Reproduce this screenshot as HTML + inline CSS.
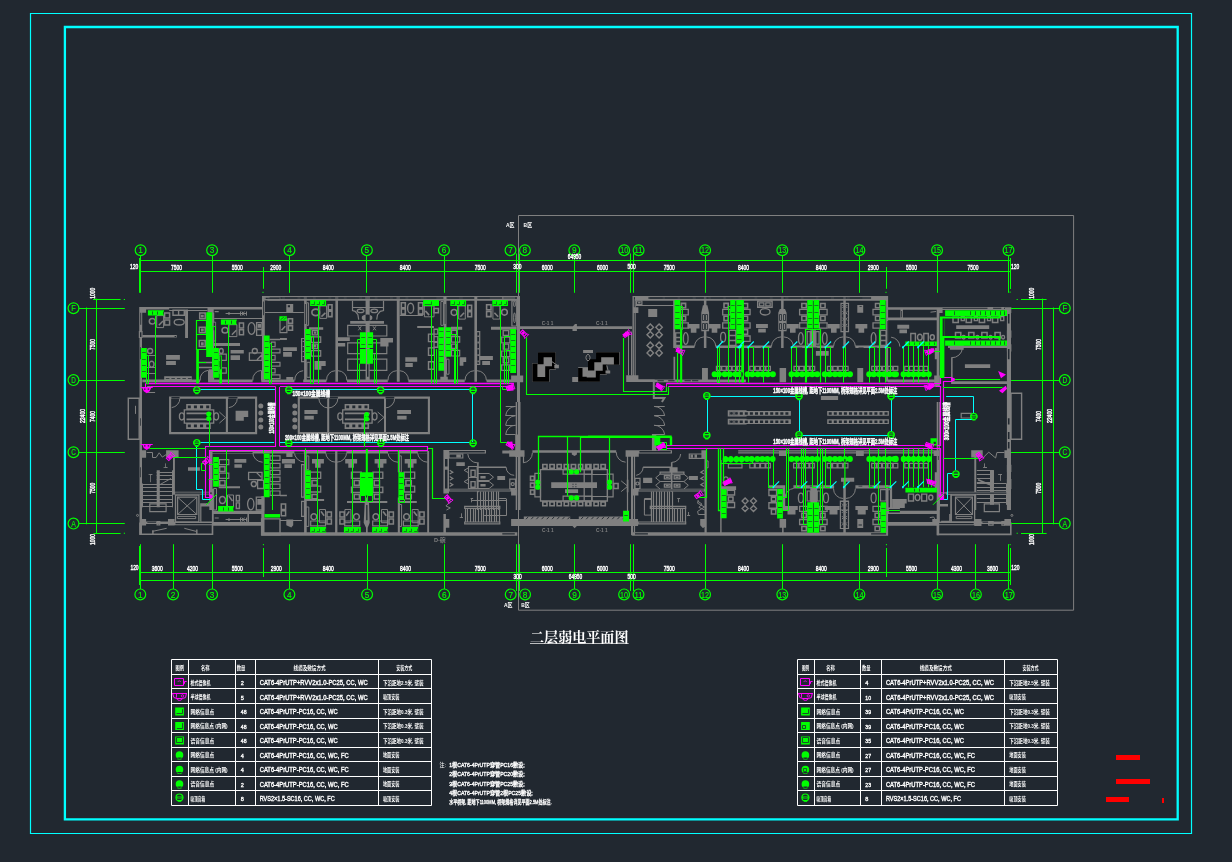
<!DOCTYPE html>
<html lang="zh"><head><meta charset="utf-8"><title>二层弱电平面图</title>
<style>
html,body{margin:0;padding:0;background:#212830;overflow:hidden}
svg{display:block}
.t{font-family:"Liberation Sans","Noto Sans CJK SC",sans-serif;fill:#fff}
.tr{font-family:"Liberation Serif","Noto Serif CJK SC",serif;fill:#fff}
</style></head><body>
<svg width="1232" height="862" viewBox="0 0 1232 862">
<rect width="1232" height="862" fill="#212830"/>
<path fill="#808080" d="M139.2 306.9H146.1V312.8H139.2ZM139.2 306.9H169.2V309.5H139.2ZM169.2 306.9H262V308.2H169.2ZM213.7 308.2H262V309.5H213.7ZM207.5 306.9H213.7V312.8H207.5ZM139.2 306.9H142.2V331.6H139.2ZM139.5 337.5H142V402H139.5ZM185.1 309.5H188V337.9H185.1ZM142.3 335.1H176.8V337.6H142.3ZM212 312.8H214.2V381.7H212ZM208.7 369.2H214.2V381.7H208.7ZM142.3 379.5H199.9V382.2H142.3ZM208.1 379.5H252.6V382.2H208.1ZM261.3 379.5H280V382.2H261.3ZM262 295.9H264.8V381.7H262ZM262 295.9H280V297.1H262ZM264.8 299H280V300H264.8ZM164.2 376.3H191.8V379.5H164.2ZM166.1 355H179.9V359.8H166.1ZM166.1 361H175.9V365.1H166.1ZM200.9 314.7H203.7V317.6H200.9ZM200.9 328.5H203.7V331.6H200.9ZM200.9 342.2H203.7V345.4H200.9ZM214.7 311H218.7V312.3H214.7ZM213.7 343.1H240V346H213.7ZM230.6 349.9H243.8V353.6H230.6ZM230.6 355.2H240V359.9H230.6ZM257.6 324.1H261.1V327.8H257.6ZM139.5 402H142V510H139.5ZM139.5 450.2H146.1V457.8H139.5ZM186.5 412.5H211.5V414.3H186.5ZM186.5 418.5H211.5V420.3H186.5ZM235.6 410.8L248.2 410.8L248.2 417L243.8 417L243.8 420.8L235.6 420.8ZM258.3 406.1a2.5 2.5 0 1 0 5 0a2.5 2.5 0 1 0 -5 0ZM258.3 413a2.5 2.5 0 1 0 5 0a2.5 2.5 0 1 0 -5 0ZM258.3 419.9a2.5 2.5 0 1 0 5 0a2.5 2.5 0 1 0 -5 0ZM258.3 427.1a2.5 2.5 0 1 0 5 0a2.5 2.5 0 1 0 -5 0ZM173 457.8H174.9V494.7H173ZM166.1 450.2H178.6V457.1H166.1ZM173 491.7H212.5V494.5H173ZM156.7 470.3H159.8V507.3H156.7ZM188 467.2H199.9V470.7H188ZM209.3 450.9H280V453.4H209.3ZM209.3 450.9H212.5V510H209.3ZM234.4 459H246.3V462.8H234.4ZM234.4 464.3H241.9V467.8H234.4ZM218.7 486.2H240V488.2H218.7ZM257.3 499.1H262V504.8H257.3ZM139.5 460H142V534.6H139.5ZM139.5 518.9H146.1V525.4H139.5ZM168 518.9H174.6V525.4H168ZM146.1 521.4H168V523.9H146.1ZM200.8 503.9H209.7V506.6H200.8ZM174.2 522H213.1V525.2H174.2ZM212 488.8H213.7V525.8H212ZM213.7 510.8H263.8V513.9H213.7ZM213.1 522H261.3V525.8H213.1ZM261.3 496.3H264.5V535.2H261.3ZM214.7 517.4H218.7V518.6H214.7ZM264.7 295.9H434V297.3H264.7ZM267.5 298.8H434V300.8H267.5ZM303.8 295.9H306.9V300.8H303.8ZM335.1 295.9H338.3V300.8H335.1ZM365.2 295.9H370V300.8H365.2ZM396.5 295.9H399.9V300.8H396.5ZM304.1 300.8H306.7V381.7H304.1ZM335.4 300.8H338V381.7H335.4ZM396.8 300.8H399.7V381.7H396.8ZM365.6 300.8H369.7V381.7H365.6ZM280 379.5H294.4V382.2H280ZM286.3 377.1H293.2V382.2H286.3ZM303.2 379.5H326.4V382.2H303.2ZM347 379.5H387.8V382.2H347ZM408.4 379.5H434V382.2H408.4ZM286.3 304H293.2V312.8H286.3ZM280 337.9H286.9V339.9H280ZM283.1 347.3H296.9V351.1H283.1ZM283.1 352.1H291.9V356.7H283.1ZM309.1 327.2H323.2V329.8H309.1ZM313.8 331.6H316.3V333.8H313.8ZM313.8 345.1H316.3V347.6H313.8ZM314.5 361L325.7 361L325.7 366.1L321.4 366.1L321.4 369.8L314.5 369.8ZM350.2 320.9H384V323.8H350.2ZM361.8 317.8a5.3 2.8 0 1 0 10.5 0a5.3 2.8 0 1 0 -10.5 0ZM337 337.2H349.8V341.1H337ZM337 343.1H345.2V346.6H337ZM380.3 337.9L393 337.9L393 342.4L388.5 342.4L388.5 346.6L380.3 346.6ZM417.2 326H434V328.1H417.2ZM405.3 357.3H417.2V361.7H405.3ZM405.3 362.9H412.8V366.9H405.3ZM292.3 406.1a2.5 2.5 0 1 0 5 0a2.5 2.5 0 1 0 -5 0ZM292.3 413a2.5 2.5 0 1 0 5 0a2.5 2.5 0 1 0 -5 0ZM292.3 419.9a2.5 2.5 0 1 0 5 0a2.5 2.5 0 1 0 -5 0ZM292.3 427.1a2.5 2.5 0 1 0 5 0a2.5 2.5 0 1 0 -5 0ZM304.4 410.1H317.6V414H304.4ZM304.4 415.8H313.8V419.5H304.4ZM344.9 412.5H369.8V414.3H344.9ZM344.9 418.5H369.8V420.3H344.9ZM397.2 410.1H411V414H397.2ZM397.2 415.8H406.6V419.5H397.2ZM280 450.9H429.1V453.4H280ZM304.1 453.4H306.7V510H304.1ZM335.1 452.1H337.4V510H335.1ZM397.8 453.4H399.9V472.2H397.8ZM427.2 450.9H429.1V510H427.2ZM281.9 459H295V463.4H281.9ZM284.4 464.3H291.9V467.9H284.4ZM286.3 451.5H292.5V457.1H286.3ZM312 459L323.9 459L323.9 463.4L320.7 463.4L320.7 467.8L315.1 467.8L315.1 463.4L312 463.4ZM345.2 459L357.1 459L357.1 463.4L353.9 463.4L353.9 467.8L348.3 467.8L348.3 463.4L345.2 463.4ZM374.6 459L386.5 459L386.5 463.4L383.4 463.4L383.4 467.8L377.7 467.8L377.7 463.4L374.6 463.4ZM404.7 459L416.6 459L416.6 463.4L413.5 463.4L413.5 467.8L407.8 467.8L407.8 463.4L404.7 463.4ZM306.3 499.1H324.1V501H306.3ZM397.8 501H416.8V502.9H397.8ZM347 501H387.3V502.9H347ZM280 494.7H286.9V496.2H280ZM261.2 532.3H434V535.7H261.2ZM304.1 497.6H306.7V532.3H304.1ZM335.1 497.6H337.4V532.3H335.1ZM397.8 497.6H399.9V532.3H397.8ZM427.2 497.6H429.1V532.3H427.2ZM366 497.6H367.7V532.3H366ZM364.7 502.6L369 502.6L369.7 522.7L367.7 527.7L366 527.7L363.7 522.7ZM286.3 519.5L293.2 519.5L293.2 525.2L291.3 527.4L286.3 525.2ZM434 295.9H519.8V297.3H434ZM434 298.8H517.3V300.8H434ZM443.4 295.9H446.5V300.8H443.4ZM474.1 295.9H477.2V300.8H474.1ZM502.3 296.5H514.8V300H502.3ZM443.8 300.8H446.5V381.7H443.8ZM474.4 300.8H477V381.7H474.4ZM517 295.9H520V402H517ZM511.1 375.5H523.2V382.2H511.1ZM450.9 326.8H462.2V329.7H450.9ZM491 326.8H516.7V329.7H491ZM434 379.5H464.7V382.2H434ZM486.6 379.5H523.2V382.2H486.6ZM440.3 376.7H447.8V382.2H440.3ZM459.7 357.3L466.2 357.3L466.2 361.9L463.4 361.9L463.4 365.7L459.7 365.7ZM477.4 335.4H478.9V337.1H477.4ZM477.4 341.6H478.9V343.4H477.4ZM477.4 347.9H478.9V349.6H477.4ZM477.4 354.2H478.9V355.9H477.4ZM477.4 360.4H478.9V362.2H477.4ZM479.7 356H492.9V359.9H479.7ZM482.2 361H490V364.9H482.2ZM520 326.3H588V329.1H520ZM572.5 326.8L575 324.1L576.9 324.1L576.9 331.1L572.5 331.1ZM515.7 402H517.2V510H515.7ZM519 402H520.5V510H519ZM515.2 434.6H520.5V457.1H515.2ZM509.2 450.2H524.5V456.8H509.2ZM502.3 450.6H515.5V453.4H502.3ZM443.4 450H486V453.6H443.4ZM443.4 450.2H449V493.5H443.4ZM456.3 454.6H460.9V457.4H456.3ZM480.4 475.9H485.6V478.4H480.4ZM480.4 484.1H485.6V486.6H480.4ZM456.3 462.2H464.8V465.9H456.3ZM497.3 475.9H505.1V479.9H497.3ZM449 488.7H515.5V491.5H449ZM511.1 489.7H517.3V495.6H511.1ZM532.4 450.2H588V452.8H532.4ZM571.8 452.8L576.9 452.8L576.9 454.6L574.6 456.1L571.8 454.6ZM551.2 482.2H588V488H551.2ZM565 489.2H578.1V493H565ZM413.9 532.3H517.3V535.7H413.9ZM443.4 513.9H445.9V532.3H443.4ZM443.4 518.9H449.3V527.7H443.4ZM511.1 519.1H588V525.9H511.1ZM523.8 516.4H570.2V519.6H523.8ZM578.8 516.4H628.2V519.6H578.8ZM572.5 525.9L576.9 525.9L574.6 528.3ZM588 326.3H632.1V329.1H588ZM632.5 295.9H633.9V381.7H632.5ZM634.6 300.8H635.7V381.7H634.6ZM632.9 307.2H638.4V313H632.9ZM626.2 375.2H638.4V382H626.2ZM632.5 295.9H745.9V297.3H632.5ZM634.6 298.8H745.9V300.8H634.6ZM635 297.1H648.4V299.6H635ZM703.9 295.9H706.4V300.8H703.9ZM638.1 301.8H640.6V303.5H638.1ZM648.2 309H657.2V316.9H648.2ZM673.2 300.8H675.2V348.1H673.2ZM673.5 356.7H675.2V381.7H673.5ZM626.2 379.2H654.7V382H626.2ZM654.4 379.5H745.9V382.2H654.4ZM702 367.9H707.9V382.2H702ZM703.9 300.8H706.4V348.1H703.9ZM702.9 305.3L707.4 305.3L709.1 312.8L709.1 331.2L701.3 331.2L701.3 312.8ZM687.6 324.1L699.5 324.1L699.5 328.5L696.4 328.5L696.4 332.8L690.8 332.8L690.8 328.5L687.6 328.5ZM708.6 324.1L720.5 324.1L720.5 328.5L717.3 328.5L717.3 332.8L711.7 332.8L711.7 328.5L708.6 328.5ZM675.2 345.4H694.5V348.1H675.2ZM715.8 345.4H745.9V348.1H715.8ZM625.6 450.2H638.8V456.8H625.6ZM631 455.9H633.1V510H631ZM588 450.2H616.2V452.8H588ZM651.9 434H656.3V452.1H651.9ZM638.1 450.2H672V453.6H638.1ZM653.2 450.2H672V453.6H653.2ZM701.4 450.2H706.7V458.6H701.4ZM690.5 454.6H693V457.8H690.5ZM694.5 454.6H697V457.8H694.5ZM669.5 467.2H677.6V472.2H669.5ZM665.7 476.4H668.8V478.1H665.7ZM665.7 484.8H668.8V486.5H665.7ZM675.5 476.4H678.6V478.1H675.5ZM675.5 484.8H678.6V486.5H675.5ZM643.1 477.8H652.2V483H643.1ZM688.9 475.9H697.9V479.9H688.9ZM704.5 458.4H706.7V510H704.5ZM632.5 488.7H705.8V491.5H632.5ZM632.5 489.7H638.4V495.6H632.5ZM584.2 482.2H597V488H584.2ZM626.8 479.7H628.4V492.2H626.8ZM721.5 486.2H736.1V490H721.5ZM588 519.1H638.1V525.9H588ZM631 460H633.1V535.2H631ZM632.1 532.3H745.9V535.7H632.1ZM700.2 518.9L706 518.9L706 525.2L703 528.3L700.2 525.2ZM704.5 460H706.7V532.3H704.5ZM720.2 460H721.6V532.3H720.2ZM738.2 295.9H888.1V297.3H738.2ZM738.2 298.8H888.1V300.8H738.2ZM871.1 297.1H886.1V299.6H871.1ZM886.1 295.9H888.1V381.7H886.1ZM888.1 307.2H899.9V309.8H888.1ZM888.1 317.4H899.9V320.3H888.1ZM781.1 295.9H783.6V348.1H781.1ZM843.3 295.9H845.8V348.1H843.3ZM779.8 309L785 309L786.6 312.8L786.6 331.2L778.3 331.2L778.3 312.8ZM756 324.1H767.9V328.1H756ZM758.2 328.8H765.8V332.6H758.2ZM786.9 324.1L798.8 324.1L798.8 328.5L795.6 328.5L795.6 332.8L790 332.8L790 328.5L786.9 328.5ZM827.8 324.1L839.7 324.1L839.7 328.5L836.6 328.5L836.6 332.8L831 332.8L831 328.5L827.8 328.5ZM855.4 324.1L867.3 324.1L867.3 328.5L864.2 328.5L864.2 332.8L858.5 332.8L858.5 328.5L855.4 328.5ZM738.2 345.4H771.4V348.1H738.2ZM793.4 345.4H833.5V348.1H793.4ZM855.4 345.4H888.1V348.1H855.4ZM815.9 351H828.7V355.7H815.9ZM810.3 330.3H815.9V348.1H810.3ZM857.3 305H863.2V312.8H857.3ZM779.6 367.9H786.1V382.2H779.6ZM857.3 367.9H863.2V382.2H857.3ZM820.9 396.1H838.1V399.9H820.9ZM738.2 411H790.9V415.8H738.2ZM738.2 419.3H790.9V424.1H738.2ZM827.2 411H888.9V415.8H827.2ZM827.2 419.3H888.9V424.1H827.2ZM738.2 450.2H899.9V451.5H738.2ZM738.2 452.3H899.9V453.5H738.2ZM779 450.2H786.1V456.1H779ZM856 450.2H863.8V456.1H856ZM768.3 485.3H785.2V488.5H768.3ZM793.4 485.3H834.1V488.5H793.4ZM855.4 485.3H891.7V488.5H855.4ZM843.3 477.8H845.8V510H843.3ZM841 477.8H854.2V481.7H841ZM782.7 488.5H785.2V510H782.7ZM890.5 485.3H892.1V510H890.5ZM810.3 488.5H817.2V510H810.3ZM784.6 506H797.8V510H784.6ZM824.7 506H838.5V510H824.7ZM855.4 506H867.3V510H855.4ZM738.2 532.3H888.1V535.7H738.2ZM886.1 485.1H888.1V535.7H886.1ZM843.3 497.6H845.8V532.3H843.3ZM785.2 506.1L797.8 506.1L797.8 510.1L795.5 510.1L795.5 514.6L787.5 514.6L787.5 510.1L785.2 510.1ZM827.2 506.1L839.7 506.1L839.7 510.1L837.5 510.1L837.5 514.6L829.5 514.6L829.5 510.1L827.2 510.1ZM855.4 506.1L867.9 506.1L867.9 510.1L865.7 510.1L865.7 514.6L857.7 514.6L857.7 510.1L855.4 510.1ZM779.6 518.9H786.1V527.7H779.6ZM782.1 527.7H783.6V532.3H782.1ZM857.3 518.9H863.2V527.9H857.3ZM888.1 507.6H899.9V514.1H888.1ZM888.1 522H899.9V525.8H888.1ZM887.9 307.2H942.4V309.8H887.9ZM936.7 307.2H942.6V313H936.7ZM1005 307.2H1011.3V313H1005ZM942.4 307.2H1005V308.2H942.4ZM942.4 308.9H1005V309.9H942.4ZM987.5 306.9H993.1V309H987.5ZM1001.3 306.9H1004V309H1001.3ZM887.9 317.4H939.2V320.3H887.9ZM900.4 309.8H902.9V317.8H900.4ZM936.7 307.2H939.4V381.7H936.7ZM1006.9 307.2H1011V402H1006.9ZM897.3 324.7H909.2V328.7H897.3ZM899.4 329.5H907V333.2H899.4ZM887.9 379.5H939.9V382.2H887.9ZM934.2 375.5H939.9V387H934.2ZM934.8 347.9H936.7V359.2H934.8ZM956.2 325.3H989.2V329H956.2ZM948 345.6H1006.9V348.1H948ZM951.1 357.3H952.6V381.7H951.1ZM951.1 381.2H1006.9V384H951.1ZM964.9 364.2H990.2V367.9H964.9ZM949.9 344.8H963.7V349.8H949.9ZM936.7 402H938V510H936.7ZM938.6 402H939.9V510H938.6ZM1006.9 402H1011V510H1006.9ZM1004.4 450.2H1011V458H1004.4ZM971.2 450.2H982.7V457.4H971.2ZM974.3 457.1H976.2V510H974.3ZM990 470.3H994V504.8H990ZM946.1 491.7H1011V494.7H946.1ZM887.9 450.2H936.7V451.5H887.9ZM887.9 452.3H936.7V453.5H887.9ZM933.6 450.2H939.9V456.1H933.6ZM892.2 499.1H906.7V503.5H892.2ZM892.2 503.5H904.8V508.1H892.2ZM934.8 472.2H936.7V489.7H934.8ZM939.2 503.9H948V506.6H939.2ZM974.3 518.9H981.5V526H974.3ZM1004.4 518.9H1011V525.7H1004.4ZM981.5 521.4H1004.4V523.9H981.5ZM938 522H974.6V525.2H938ZM936.7 460H939.2V535.2H936.7ZM887.9 510.8H936.7V513.9H887.9ZM887.9 522H938V525.8H887.9ZM932.3 518.9H938V525.8H932.3Z"/>
<path fill="none" stroke="#808080" stroke-width="1" d="M518.5 215.5H1073.6V610.2H518.5ZM169.2 310.5H207.5M213.7 322.2H215.6V341H213.7ZM200.2 380.5A8.8 8.8 0 0 1 208.1 370.4M208.5 370.4V380.5M252.8 380.5A9 9 0 0 1 261.3 370.4M261.5 370.4V380.5M265.1 312.5H280M265.1 297.1H280V300H265.1ZM156.7 315.6H163.6V327.6H156.7ZM214.2 318.5H262M225.6 313.5H246.3M228.1 313.5a0.9 0.9 0 1 0 1.8 0a0.9 0.9 0 1 0 -1.8 0ZM240.5 311.5V315.6M246.5 311.5V315.6M241.9 311.5L244.4 315.6M244.4 311.5L241.9 315.6M229 324.7H236.9V336.6H229ZM135.5 405.8V413.9M171.7 407.6A9.4 9.4 0 0 0 179.9 398.2M228.8 407.6A9.4 9.4 0 0 0 237.3 398.2M219.4 412L225.6 417.7M219.4 423.1L225.6 417.7M146.7 452.5L152.5 452.5L152.5 457.5L156.1 457.5L159.2 452.8L162.3 457.1L166.1 454.6M142.5 483.5V507.3M172.5 470.3V507.3M159.8 484.7L171.1 478.4M252.8 452.1A10 10 0 0 0 262.6 462.2M227.5 495H233.5V510H227.5ZM213.7 488.5H216.5V510H213.7ZM136.5 515.4a1 1 0 1 0 2 0a1 1 0 1 0 -2 0ZM152.3 531.4L166.7 528.3M184.3 528.3L196.2 531.4M177.6 497.2L196.8 514.5M196.8 497.2L177.6 514.5M177.4 516.4H195.7V518.6H177.4ZM225.6 519.5H246.3M228.1 519.6a0.9 0.9 0 1 0 1.8 0a0.9 0.9 0 1 0 -1.8 0ZM240.5 517.6V521.7M246.5 517.6V521.7M241.9 517.6L244.4 521.7M244.4 517.6L241.9 521.7M306.7 302.8H308.6V325.3H306.7ZM294.8 380.5A9 9 0 0 1 303.2 370.7M326.6 380.5A9 9 0 0 1 335.4 370.7M338 370.7A9 9 0 0 1 346.8 380.5M388 380.5A9 9 0 0 1 396.8 370.7M399.7 370.7A9 9 0 0 1 408.4 380.5M280 312.5H303.8M319.8 305.9H326.6V318.4H319.8ZM302.6 341.5H304.4M302.6 346.5H304.4M302.6 351.5H304.4M302.6 356.5H304.4M306.9 362.3H310.1V377.3H306.9ZM358.3 326.3L361.2 330.3M361.2 326.3L358.3 330.3M373 326.3L375.9 330.3M375.9 326.3L373 330.3M424.4 305.9H434V316.8H424.4ZM399.7 315.5H422.9M318.8 398.2A9.8 9.8 0 0 0 328.2 408M328.2 408A9.8 9.8 0 0 0 337.9 398.2M385.3 408A9.8 9.8 0 0 0 394.7 398.2M377.7 412L384 417.4M377.7 422.8L384 417.4M294.4 452.1A9.8 9.8 0 0 0 304.1 461.9M325.7 452.1A10 10 0 0 0 335.8 462.2M336.6 462.2A10 10 0 0 0 346.7 452.1M388 452.1A10 10 0 0 0 398 462.2M417.6 452.1A10 10 0 0 0 427.6 462.2M306.7 455.9H308.8V469.7H306.7ZM399 455.9H401.3V472.2H399ZM305.9 507H308.8V526.4H305.9ZM399 504.5H401.6V526.4H399ZM280 520.5H301.9M319.5 509.5H325.5V522.7H319.5ZM381.5 509.5H387.5V522.7H381.5ZM412.2 509.5H418.2V522.7H412.2ZM344.9 509.5H350.9V522.7H344.9ZM440.9 301.5H443.4V325.3H440.9ZM513.6 304a0.9 2.8 0 1 0 1.8 0a0.9 2.8 0 1 0 -1.8 0ZM513.6 317.8a0.9 5 0 1 0 1.8 0a0.9 5 0 1 0 -1.8 0ZM465 380.5A9.5 9.5 0 0 1 474.4 370.7M477 370.7A9.5 9.5 0 0 1 486.4 380.5M458.7 305.9H465.3V319.1H458.7ZM446.5 359.2H449V374.2H446.5ZM492.9 305.9H499.8V319.1H492.9ZM515.5 406.4A10 10 0 0 0 505.7 415.8M515.5 415.8A10 10 0 0 0 505.7 425.2M515.5 425.2A10 10 0 0 0 505.7 434.6M467.8 454A9.4 9.4 0 0 0 477.2 462.8M506.1 467.2A8.1 8.1 0 0 0 514.2 475.3M468.5 467.8L464.1 470.3L468.5 472.8M468.5 479.1L464.1 481.6L468.5 484.1M477.9 473.5L489.1 473.5L493.5 477.2L489.1 480.5L477.9 480.5M477.9 481.5L489.1 481.5L493.5 485L489.1 488.5L477.9 488.5M499.2 498.5H506.1M506.5 498.7V510M450.9 501L445.9 506L450.3 507.9L446.5 510M523.2 462.8A10 10 0 0 0 532.4 452.8M471.6 500.5L506.5 500.5L506.5 515.5L484.1 515.5M628.5 331.6V375.5M631.5 331.6V375.5M694.5 346.6A9.8 9.8 0 0 1 703.9 336.9M706.4 336.9A9.8 9.8 0 0 1 715.8 346.6M654.2 406.4A10.7 10.7 0 0 1 664.7 415.8M654.2 415.8A10.7 10.7 0 0 1 664.7 425.2M654.2 425.2A10.7 10.7 0 0 1 664.7 434.6M616.2 452.1A10 10 0 0 0 625.6 462.2M671.7 462.4A9 9 0 0 0 680.7 454M636.2 475.3A8.1 8.1 0 0 0 643.1 467.2M660.1 474.1L655.7 477.8L660.1 481.6L655.7 485.3L660.1 489.1M683.9 474.1L688.3 477.8L683.9 481.6L688.3 485.3L683.9 489.1M706.4 460.9H708.1V467.8H706.4ZM651.3 498.5L644.5 498.5L644.5 510M697.6 501L702 504.1L698.9 507.3L704.5 510M621.2 480.9L627.8 486.2M621.2 491.6L627.8 486.2M644.4 499.5H651.3V515.1H644.4ZM698.3 500.1L697.6 503.2L704.5 507L697.6 511.4L698.3 514.5L705.8 514.5M842.3 305L843.8 306.5L842.3 308M847.3 305L845.8 306.5L847.3 308M842.3 311.3L843.8 312.8L842.3 314.3M847.3 311.3L845.8 312.8L847.3 314.3M842.3 317.6L843.8 319.1L842.3 320.6M847.3 317.6L845.8 319.1L847.3 320.6M842.3 323.8L843.8 325.3L842.3 326.8M847.3 323.8L845.8 325.3L847.3 326.8M771.4 346.6A9.8 9.8 0 0 1 781.1 336.9M783.6 336.9A9.8 9.8 0 0 1 793.4 346.6M833.5 346.6A9.8 9.8 0 0 1 843.3 336.9M845.8 336.9A9.8 9.8 0 0 1 855.4 346.6M891.1 337.2A9.8 9.8 0 0 1 899.9 346.6M785.2 497.2A9 9 0 0 1 793.6 488.5M833.5 488.5A9.8 9.8 0 0 0 843.3 498.5M855.4 488.5A9.8 9.8 0 0 1 845.8 498.5M888 489.7H890.5V510H888ZM841.9 503.6L843.4 505.1L841.9 506.6M847 503.6L845.5 505.1L847 506.6M841.9 509.9L843.4 511.4L841.9 512.9M847 509.9L845.5 511.4L847 512.9M841.9 516.1L843.4 517.6L841.9 519.1M847 516.1L845.5 517.6L847 519.1M841.9 522.4L843.4 523.9L841.9 525.4M847 522.4L845.5 523.9L847 525.4M930.5 312.2L936.1 311.5M951.8 357.7A10.3 10.3 0 0 0 962.4 348.1M983.7 457.1L988.7 452.1L995.6 458L996.9 452.5L1004.4 452.5M1006.5 483.5V504.8M955.5 497.2L972.4 514.5M972.4 497.2L955.5 514.5M956.2 516.4H971.8V518.6H956.2ZM1010.9 515.4a1 1 0 1 0 2 0a1 1 0 1 0 -2 0ZM929.8 517.6L933.6 517L934.8 518.9"/>
<path fill="none" stroke="#808080" stroke-width="1.2" d="M139.4 331.6H142V337.5H139.4ZM147.1 355.5H155.1M147.1 367.5H155.1M147.1 373.5H155.1M147.1 386.5H155.1M147.1 392.5H155.1M219 354.2H226.3V360.4H219ZM219 367.9H226.3V373.2H219ZM271.4 342.2H275.1V346.6H271.4ZM271.4 349.1H280V352.9H271.4ZM271.4 355.4H275.1V359.8H271.4ZM271.4 362.3H280V366.1H271.4ZM271.4 368.6H275.1V372.9H271.4ZM271.4 374.8H280V378.6H271.4ZM219.4 459.6H228.8V464.7H219.4ZM219.4 473.1H228.8V478.4H219.4ZM256.3 472.4L261.3 477.2M270.1 455.9H280V460.3H270.1ZM270.1 463.4H280V467.8H270.1ZM270.1 470.3H280V474.7H270.1ZM270.1 477.2H280V481.6H270.1ZM270.1 484.1H280V488.5H270.1ZM270.1 491H280V495.4H270.1ZM157.1 521.7H159.8V524.9H157.1ZM149.8 503.9H166.1V511.6H149.8ZM177.6 497.2H196.8V514.5H177.6ZM200.8 503.9H212.5V522H200.8ZM280 319.3H286.9V332.6H280ZM301.6 338.5H305.1V361.7H301.6ZM311.3 336.9H320.7V342.4H311.3ZM311.3 350.6H320.7V356.2H311.3ZM347.7 325.3H386.8V336H347.7ZM347.7 342.9H386.8V353.6H347.7ZM347.7 359.2H386.8V370.4H347.7ZM352.5 300.8L352.5 310.5L355.2 311.3L357.9 314.7L358.7 319.7M383.5 300.8L383.5 310.5L380.3 311.3L377.5 314.7L376.7 319.7M352.1 307.5H383.5M301.6 464.7H304.1V497.2H301.6ZM301.6 501.4H304.4V516.4H301.6ZM310.7 521H325.5V525.8H310.7ZM372.7 521H387.5V525.8H372.7ZM403.4 521H418.2V525.8H403.4ZM344.7 521H359.7V525.8H344.7ZM511.9 300.9H516.7V326H511.9ZM451.5 336.6H459.7V342.2H451.5ZM451.5 350.4H459.7V356H451.5ZM476.6 331.6H479.7V364.4H476.6ZM501.7 337.2H509.8V342.9H501.7ZM501.7 351H509.8V356.7H501.7ZM501.7 364.8H509.8V370.4H501.7ZM505.7 406.5H515.5M505.7 415.5H515.5M505.7 425.5H515.5M505.7 434.5H515.5M449 454H462.8V458H449ZM468.5 466.5H477.2V488.5H468.5ZM468.5 477.5H477.2M509.8 479.1H515.5V488.5H509.8ZM511.2 484.1a1.5 1.5 0 1 0 3 0a1.5 1.5 0 1 0 -3 0ZM449.7 470.3L452.8 472.2L449.7 474.1M449.7 476.6L452.8 478.4L449.7 480.3M449.7 482.8L452.8 484.7L449.7 486.6M477.5 491.6V510M480.5 491.6V510M483.5 491.6V510M485.5 491.6V510M488.5 491.6V510M491.5 491.6V510M493.5 491.6V510M496.5 491.6V510M498.5 491.6V510M464.7 506.3H499.8V508.5H464.7ZM523.5 452.1V462.8M534.9 473.4H540.5V496.9H534.9ZM563.1 469.7H591.9V474.2H563.1ZM563.1 496.2H591.9V501H563.1ZM464.7 522H499.8V523.9H464.7ZM465.5 508.2V522M467.5 508.2V522M470.5 508.2V522M473.5 508.2V522M475.5 508.2V522M478.5 508.2V522M481.5 508.2V522M483.5 508.2V522M486.5 508.2V522M489.5 508.2V522M491.5 508.2V522M494.5 508.2V522M496.5 508.2V522M499.5 508.2V522M464.7 506.4H499.8V508.4H464.7ZM635.7 305.5H674.5M636.6 301H641.9V304.5H636.6ZM716.4 366.3H721V370.4H716.4ZM721.7 366.3H726.2V370.4H721.7ZM727 366.3H731.5V370.4H727ZM732.2 366.3H736.7V370.4H732.2ZM737.5 366.3H742V370.4H737.5ZM654.2 406.5H664.7M654.2 415.5H664.7M654.2 425.5H664.7M652.5 434.5H664.7M627.5 455.9V510M634.5 455.9V510M689.3 454H705.8V458.4H689.3ZM660.1 472.2H683.9V474.1H660.1ZM660.1 481.5H683.9M635 478.4H640V488.7H635ZM636 483.5a1.5 1.5 0 1 0 3 0a1.5 1.5 0 1 0 -3 0ZM703.9 470.3L700.8 472.2L703.9 474.1M703.9 476.6L700.8 478.4L703.9 480.3M703.9 482.8L700.8 484.7L703.9 486.6M651.5 491.6V510M653.5 491.6V510M656.5 491.6V510M659.5 491.6V510M661.5 491.6V510M664.5 491.6V510M667.5 491.6V510M669.5 491.6V510M672.5 491.6V510M650.3 506.3H685.7V508.5H650.3ZM607.4 474.1H613.1V496.9H607.4ZM584.2 474.5H607.4M584.2 496.5H607.4M730 412H733V414.8H730ZM730 420.3H733V423.1H730ZM735 412H738V414.8H735ZM735 420.3H738V423.1H735ZM740 412H743V414.8H740ZM740 420.3H743V423.1H740ZM728.4 464H742V467.8H728.4ZM627.5 460V518.9M634.5 460V532.7M651.5 508.2V522M653.5 508.2V522M656.5 508.2V522M659.5 508.2V522M661.5 508.2V522M664.5 508.2V522M667.5 508.2V522M669.5 508.2V522M672.5 508.2V522M674.5 508.2V522M677.5 508.2V522M680.5 508.2V522M682.5 508.2V522M685.5 508.2V522M650.3 506.4H685.7V508.4H650.3ZM638.1 522H685.7V523.9H638.1ZM841 303.4H848.5V331.6H841ZM759.5 302.8H763.9V305.9H759.5ZM765.8 302.8H770.2V305.9H765.8ZM807.2 331.6H810.3V344.1H807.2ZM815.9 331.6H819.1V344.1H815.9ZM749.8 366.3H754.3V370.4H749.8ZM755.2 366.3H759.7V370.4H755.2ZM760.5 366.3H765.1V370.4H760.5ZM765.9 366.3H770.4V370.4H765.9ZM794 366.3H798.5V370.4H794ZM799.4 366.3H803.9V370.4H799.4ZM804.8 366.3H809.3V370.4H804.8ZM810.2 366.3H814.7V370.4H810.2ZM827.5 366.3H832V370.4H827.5ZM832.9 366.3H837.4V370.4H832.9ZM838.2 366.3H842.8V370.4H838.2ZM843.6 366.3H848.1V370.4H843.6ZM871.7 366.3H876.2V370.4H871.7ZM877.1 366.3H881.6V370.4H877.1ZM882.5 366.3H887V370.4H882.5ZM887.9 366.3H892.4V370.4H887.9ZM893.3 366.3H897.8V370.4H893.3ZM749.8 463.4H754.3V467.8H749.8ZM755.2 463.4H759.7V467.8H755.2ZM760.5 463.4H765.1V467.8H760.5ZM765.9 463.4H770.4V467.8H765.9ZM793.6 463.4H798.1V467.8H793.6ZM799 463.4H803.5V467.8H799ZM804.4 463.4H808.9V467.8H804.4ZM809.8 463.4H814.3V467.8H809.8ZM827.2 463.4H831.7V467.8H827.2ZM832.6 463.4H837.1V467.8H832.6ZM838 463.4H842.5V467.8H838ZM843.4 463.4H847.9V467.8H843.4ZM871.7 463.4H876.2V467.8H871.7ZM877.1 463.4H881.6V467.8H877.1ZM882.5 463.4H887V467.8H882.5ZM887.9 463.4H892.4V467.8H887.9ZM893.3 463.4H897.8V467.8H893.3ZM840.4 501H848.5V510H840.4ZM807.2 491H810.3V501H807.2ZM817.2 491H820.3V501H817.2ZM880.5 489.7H886.1V501H880.5ZM840.4 501.4H848.5V528.5H840.4ZM1007.5 331.1H1010.8V337.2H1007.5ZM1007.5 344.8H1010.8V351H1007.5ZM904.8 366.3H908.8V370.4H904.8ZM909.5 366.3H913.5V370.4H909.5ZM914.3 366.3H918.3V370.4H914.3ZM919.1 366.3H923.1V370.4H919.1ZM923.8 366.3H927.8V370.4H923.8ZM1007.5 465.3H1010.8V471.5H1007.5ZM1007.5 479.7H1010.8V488.5H1007.5ZM961.2 413.3H971.2V418H961.2ZM904.8 463.4H908.8V467.8H904.8ZM909.5 463.4H913.5V467.8H909.5ZM914.3 463.4H918.3V467.8H914.3ZM919.1 463.4H923.1V467.8H919.1ZM923.8 463.4H927.8V467.8H923.8ZM955.5 497.2H972.4V514.5H955.5ZM939.2 492.8H951.1V522H939.2ZM984.3 503.9H999.4V511.6H984.3ZM988.7 521.7H993.1V525.2H988.7ZM1001.9 521.7H1004.4V525.2H1001.9Z"/>
<path fill="none" stroke="#808080" stroke-width="1.4" d="M173 310.3H184.3V315.3H173ZM178.6 310.3V315.3M147.6 351a2.5 2.5 0 1 0 5 0a2.5 2.5 0 1 0 -5 0ZM149.4 364.2a2.3 2.5 0 1 0 4.5 0a2.3 2.5 0 1 0 -4.5 0ZM219.2 351a2 2.5 0 1 0 4 0a2 2.5 0 1 0 -4 0ZM252.3 351a2.5 2.5 0 1 0 5 0a2.5 2.5 0 1 0 -5 0ZM128.3 398.2H139.2V439.3H128.3ZM219.7 466.8H225V471.5H219.7ZM219.7 480.6H225V485.3H219.7ZM219.5 500a3 3.5 0 1 0 6 0a3 3.5 0 1 0 -6 0ZM228.8 496L232.5 501M236.3 495.4H239.4V501H236.3ZM236.3 502.9H239.4V508.5H236.3ZM261.6 518.9H280V534.9H261.6ZM312.3 330.6H317.6V334.9H312.3ZM312.3 344.1H317.6V348.6H312.3ZM407.6 308.2a3 5 0 1 0 6 0a3 5 0 1 0 -6 0ZM428.5 334.1H434V341.6H428.5ZM428.5 347.9H434V355.4H428.5ZM428.5 361.7H434V369.2H428.5ZM434 329.3H437.8V334.1H434ZM434 336.6H437.8V341.6H434ZM434 342.2H437.8V347.3H434ZM451.5 330.3H456.6V334.7H451.5ZM451.5 344.1H456.6V348.5H451.5ZM503.2 330.6H508.7V335.4H503.2ZM503.2 344.1H508.7V349.1H503.2ZM503.2 357.9H508.7V362.9H503.2ZM471 470.3H475.1V476.6H471ZM471 481.6H475.1V487.2H471ZM650.3 323.9L653.5 327.2L650.3 330.5L647 327.2ZM659.1 323.9L662.3 327.2L659.1 330.5L655.8 327.2ZM650.3 331.5L653.5 334.7L650.3 338L647 334.7ZM659.1 331.5L662.3 334.7L659.1 338L655.8 334.7ZM650.3 342.1L653.5 345.4L650.3 348.6L647 345.4ZM659.1 342.1L662.3 345.4L659.1 348.6L655.8 345.4ZM650.3 349.6L653.5 352.9L650.3 356.2L647 352.9ZM659.1 349.6L662.3 352.9L659.1 356.2L655.8 352.9ZM757.7 301H772.1V307.3H757.7ZM745.1 498L748.1 501L745.1 504L742.1 501ZM753.5 498L756.5 501L753.5 504L750.5 501ZM745.1 505.5L748.1 508.5L745.1 511.5L742.1 508.5ZM753.5 505.5L756.5 508.5L753.5 511.5L750.5 508.5ZM910.8 333.5H915.4V343.5H910.8ZM923.8 333.5H928.3V343.5H923.8ZM1011 393.2H1021.6V439.3H1011ZM908.5 494.1H913.5V501H908.5ZM921.7 494.1H926.7V501H921.7ZM941.1 521.4L949.9 521.4L949.9 513.9"/>
<path fill="none" stroke="#808080" stroke-width="1.3" d="M174.2 322.2a5 2.8 0 1 0 10 0a5 2.8 0 1 0 -10 0ZM198.9 362.5H212.5M198.9 367.5H212.5M248.3 328.5a3.3 5 0 1 0 6.5 0a3.3 5 0 1 0 -6.5 0ZM256.6 322.6H262V335.4H256.6ZM256.6 329.5H262M249.4 352.9H262V360.4H249.4ZM257 359.8L262 354.8M269.5 339.5H280M184.3 409.8H213.7V423.1H184.3ZM179.5 416.4a2.3 3 0 1 0 4.5 0a2.3 3 0 1 0 -4.5 0ZM214 416.4a2.3 3 0 1 0 4.5 0a2.3 3 0 1 0 -4.5 0ZM248.6 472.4H262V479.7H248.6ZM257.6 480.3H263.6V488.5H257.6ZM247.6 504.1a3.1 5.6 0 1 0 6.3 0a3.1 5.6 0 1 0 -6.3 0ZM256.3 497.2H263.6V510H256.3ZM175.5 495.1H198.9V522H175.5ZM357.3 310.9a3.3 1.5 0 1 0 6.5 0a3.3 1.5 0 1 0 -6.5 0ZM371 310.9a3.3 1.5 0 1 0 6.5 0a3.3 1.5 0 1 0 -6.5 0ZM342.7 409.8H372.1V423.1H342.7ZM337.9 416.4a2.3 3 0 1 0 4.5 0a2.3 3 0 1 0 -4.5 0ZM372.4 416.4a2.3 3 0 1 0 4.5 0a2.3 3 0 1 0 -4.5 0ZM310.1 472.2H320.7V478.4H310.1ZM310.1 486.2H320.7V492H310.1ZM404.1 472.2H414.7V478.4H404.1ZM404.1 486.2H414.7V492H404.1ZM351.4 472.2H361.2V478.4H351.4ZM351.4 487.2H361.2V492.5H351.4ZM373 472.2H382.8V478.4H373ZM373 487.2H382.8V492.5H373ZM540.5 469.7H591.9V501H540.5ZM680.7 309.3H688.3V314.8H680.7ZM680.7 322.8H688.3V328.1H680.7ZM722.7 309.3H730.2V314.8H722.7ZM722.7 322.8H730.2V328.1H722.7ZM675.7 332.8H680.7V345.4H675.7ZM675.7 337.5H680.7M675.7 341.5H680.7M683.5 338.5a2.3 4.8 0 1 0 4.5 0a2.3 4.8 0 1 0 -4.5 0ZM720.6 337.2a2.5 4.8 0 1 0 5 0a2.5 4.8 0 1 0 -5 0ZM729.2 330.3H735.9V345.4H729.2ZM729.2 335.5H735.9M729.2 340.5H735.9M664.4 475.7H670.1V478.8H664.4ZM664.4 484.1H670.1V487.2H664.4ZM674.2 475.7H679.9V478.8H674.2ZM674.2 484.1H679.9V487.2H674.2ZM584.2 469.7H607.4V501H584.2ZM728.4 411H745.9V415.8H728.4ZM728.4 419.3H745.9V423.8H728.4ZM727.1 490.3H734.6V495H727.1ZM727.1 502.5H734.6V507.5H727.1ZM723.6 479.7a2.3 2.3 0 1 0 4.5 0a2.3 2.3 0 1 0 -4.5 0ZM742 309.3H750.1V314.7H742ZM742 322.8H750.1V328.2H742ZM742 336H750.1V341.4H742ZM760.4 311.8a4.8 2.8 0 1 0 9.5 0a4.8 2.8 0 1 0 -9.5 0ZM799.6 309.3H807.4V314.8H799.6ZM799.6 322.8H807.4V328.1H799.6ZM819.3 309.3H827.1V314.8H819.3ZM819.3 322.8H827.1V328.1H819.3ZM798.6 338.5a2.3 4.8 0 1 0 4.5 0a2.3 4.8 0 1 0 -4.5 0ZM822.5 338.5a2.3 4.8 0 1 0 4.5 0a2.3 4.8 0 1 0 -4.5 0ZM873 309.3H880.5V314.8H873ZM873 322.8H880.5V328.1H873ZM871.3 338.5a2.3 4.8 0 1 0 4.5 0a2.3 4.8 0 1 0 -4.5 0ZM880.5 330.3H886.1V345.4H880.5ZM880.5 335.5H886.1M880.5 340.5H886.1M768.9 489.7H776.5V495.4H768.9ZM768.9 502.9H776.5V508.5H768.9ZM798.4 497.9a2.5 4.8 0 1 0 5 0a2.5 4.8 0 1 0 -5 0ZM823.5 497.9a2.5 4.8 0 1 0 5 0a2.5 4.8 0 1 0 -5 0ZM871.1 497.9a2.5 4.8 0 1 0 5 0a2.5 4.8 0 1 0 -5 0ZM768.9 490.1H776.5V495.7H768.9ZM768.9 502.6H776.5V508.2H768.9ZM799.6 506.4H807.4V511.4H799.6ZM799.6 519.5H807.4V524.5H799.6ZM819.3 506.4H827.1V511.4H819.3ZM819.3 519.5H827.1V524.5H819.3ZM873 506.4H880.7V511.4H873ZM873 519.5H880.7V524.5H873ZM961.2 316.6H964.3V320.6H961.2ZM974.3 316.6H977.5V320.6H974.3ZM987.5 316.6H990.6V320.6H987.5ZM1000.6 316.6H1003.8V320.6H1000.6ZM962.2 337.2a1.5 1.8 0 1 0 3 0a1.5 1.8 0 1 0 -3 0ZM975.9 337.2a1.5 1.8 0 1 0 3 0a1.5 1.8 0 1 0 -3 0ZM989.1 337.2a1.5 1.8 0 1 0 3 0a1.5 1.8 0 1 0 -3 0ZM1001.6 337.2a1.5 1.8 0 1 0 3 0a1.5 1.8 0 1 0 -3 0ZM951.1 495.1H974.6V522H951.1Z"/>
<path fill="none" stroke="#808080" stroke-width="1.5" d="M149.3 321.2a3 2.8 0 1 0 6 0a3 2.8 0 1 0 -6 0ZM164.6 313H169.6V318.1H164.6ZM164.6 319.9H169.6V325.1H164.6ZM158.8 325.3L163 320.9M199.7 313H205.2V318.8H199.7ZM199.3 327.2H205.2V332.8H199.3ZM199.3 340.6H205.2V346.6H199.3ZM222 330.3a3 2.8 0 1 0 6 0a3 2.8 0 1 0 -6 0ZM239.4 323.1H243.5V328.1H239.4ZM239.4 329.7H243.5V334.7H239.4ZM231.9 334.7L236.3 330.3M251.3 484.1a2.5 2.5 0 1 0 5 0a2.5 2.5 0 1 0 -5 0ZM152.9 530.2V533.9M196.8 529.5V533.9M248.2 513.9V522M312 480.4H317.3V485H312ZM312 494.4H317.3V498.7H312ZM405.9 480.4H411.3V485H405.9ZM405.9 494.4H411.3V498.7H405.9ZM354.2 480.4H359.4V485.2H354.2ZM354.2 494.4H359.4V499.1H354.2ZM374.2 480.4H379.5V485.2H374.2ZM374.2 494.4H379.5V499.1H374.2ZM281.3 503.9H285.6V509.5H281.3ZM281.3 510.8H285.6V515.8H281.3ZM311.1 516.8a2.8 2.5 0 1 0 5.5 0a2.8 2.5 0 1 0 -5.5 0ZM327 512H331.4V517H327ZM327 518.9H331.4V523.9H327ZM373.1 516.8a2.8 2.5 0 1 0 5.5 0a2.8 2.5 0 1 0 -5.5 0ZM389 512H393.4V517H389ZM389 518.9H393.4V523.9H389ZM403.8 516.8a2.8 2.5 0 1 0 5.5 0a2.8 2.5 0 1 0 -5.5 0ZM419.7 512H424.1V517H419.7ZM419.7 518.9H424.1V523.9H419.7ZM353.7 516.8a2.8 2.5 0 1 0 5.5 0a2.8 2.5 0 1 0 -5.5 0ZM339.9 512H344.3V517H339.9ZM339.9 518.9H344.3V523.9H339.9ZM434 308.4H438.4V312.8H434ZM728.4 496.9H733V501H728.4ZM742 303.4H747.6V307.9H742ZM742 316.2H747.6V320.7H742ZM742 329.7H747.6V334.2H742ZM801.8 303.4H806.3V307.8H801.8ZM801.8 316.2H806.3V320.6H801.8ZM820.6 303.4H825.1V307.8H820.6ZM820.6 316.2H825.1V320.6H820.6ZM875.5 303.4H879.8V307.8H875.5ZM875.5 316.2H879.8V320.6H875.5ZM771.4 497.2H775.8V501.6H771.4ZM771.4 496.6H775.8V501.1H771.4ZM771.4 509.5H775.8V513.9H771.4ZM801.8 513.3H806.3V517.6H801.8ZM801.8 526.4H806.3V530.8H801.8ZM820.6 513.3H825.1V517.6H820.6ZM820.6 526.4H825.1V530.8H820.6ZM875.1 513.3H879.6V517.6H875.1ZM875.1 526.4H879.6V530.8H875.1ZM917.6 337.2a2.3 2.5 0 1 0 4.5 0a2.3 2.5 0 1 0 -4.5 0ZM930.3 337.2a2 2.5 0 1 0 4 0a2 2.5 0 1 0 -4 0ZM953 317.2H958.3V322.6H953ZM966.2 317.2H971.4V322.6H966.2ZM979.3 317.2H984.6V322.6H979.3ZM992.5 317.2H997.8V322.6H992.5ZM955.5 332.6H960.8V337.9H955.5ZM968.7 332.6H973.9V337.9H968.7ZM981.8 332.6H987.1V337.9H981.8ZM995 332.6H1000.3V337.9H995ZM978.1 479.7L990 484.7M915.3 497.5a2.3 2.5 0 1 0 4.5 0a2.3 2.5 0 1 0 -4.5 0ZM928.8 497.5a2 2.5 0 1 0 4 0a2 2.5 0 1 0 -4 0Z"/>
<path fill="none" stroke="#808080" stroke-width="2.1" d="M170.1 397.6H256.1V433.1H170.1ZM226.9 397.6V433.1M298.8 397.6H428.9V433.1H298.8Z"/>
<path fill="none" stroke="#808080" stroke-width="1.6" d="M187 404.8H191.6V409H187ZM187 423.8H191.6V428.1H187ZM193.1 404.8H197.7V409H193.1ZM193.1 423.8H197.7V428.1H193.1ZM199.2 404.8H203.9V409H199.2ZM199.2 423.8H203.9V428.1H199.2ZM205.4 404.8H210V409H205.4ZM205.4 423.8H210V428.1H205.4ZM140 523.3H212.5V534.2H140ZM281.5 330.3L285.3 326.3M288.4 318.7H292.5V323.4H288.4ZM288.4 325.6H292.5V330.3H288.4ZM312 312.4a3.8 2.8 0 1 0 7.5 0a3.8 2.8 0 1 0 -7.5 0ZM328.2 304.7H332V309.7H328.2ZM328.2 311.2H332V316.6H328.2ZM321.4 316.6L325.4 312.8M401.3 302.8H405.3V307.8H401.3ZM401.3 309H405.3V314.1H401.3ZM418.5 302.8H422.9V307.8H418.5ZM418.5 309H422.9V314.1H418.5ZM425.4 310.9L429.1 315.1M345.4 404.8H350V409H345.4ZM345.4 423.8H350V428.1H345.4ZM351.5 404.8H356.1V409H351.5ZM351.5 423.8H356.1V428.1H351.5ZM357.6 404.8H362.2V409H357.6ZM357.6 423.8H362.2V428.1H357.6ZM363.7 404.8H368.3V409H363.7ZM363.7 423.8H368.3V428.1H363.7ZM321 511.4L324.2 515.8M383 511.4L386.3 515.8M413.7 511.4L417 515.8M349.3 511.4L346.2 515.8M451.3 312.4a2.8 2.5 0 1 0 5.5 0a2.8 2.5 0 1 0 -5.5 0ZM467.8 305.3H471.6V310.3H467.8ZM467.8 311.8H471.6V316.8H467.8ZM460.3 316.8L464.1 312.8M486.6 304.7H491V309.7H486.6ZM486.6 311.5H491V316.6H486.6ZM494.4 312.8L498.2 316.8M501.7 312.2a2.8 2.5 0 1 0 5.5 0a2.8 2.5 0 1 0 -5.5 0ZM477.9 462.2V492.2M477.9 467.2H506.1M542.8 464.5H547V468.4H542.8ZM542.8 501.9H547V505.8H542.8ZM549.9 464.5H554.2V468.4H549.9ZM549.9 501.9H554.2V505.8H549.9ZM557.1 464.5H561.3V468.4H557.1ZM557.1 501.9H561.3V505.8H557.1ZM564.2 464.5H568.5V468.4H564.2ZM564.2 501.9H568.5V505.8H564.2ZM571.3 464.5H575.6V468.4H571.3ZM571.3 501.9H575.6V505.8H571.3ZM578.5 464.5H582.7V468.4H578.5ZM578.5 501.9H582.7V505.8H578.5ZM585.6 464.5H589.9V468.4H585.6ZM585.6 501.9H589.9V505.8H585.6ZM530.5 476.2H534.3V480.4H530.5ZM530.5 483.1H534.3V487.3H530.5ZM530.5 490H534.3V494.2H530.5ZM681.4 303.4H685.6V307.8H681.4ZM681.4 316.2H685.6V320.6H681.4ZM724 303.4H728.2V307.8H724ZM724 316.2H728.2V320.6H724ZM671.7 462.2V491.6M643.1 467.2H671.7M586.7 464.5H591V468.4H586.7ZM586.7 501.9H591V505.8H586.7ZM594 464.5H598.3V468.4H594ZM594 501.9H598.3V505.8H594ZM601 464.5H605.3V468.4H601ZM601 501.9H605.3V505.8H601ZM613.7 483.5H618.1V488.5H613.7ZM937.6 523.3H1010.8V534.4H937.6Z"/>
<path fill="none" stroke="#808080" stroke-width="0.8" d="M175.1 493.5H211.8M163.6 467.5L167.4 467.5L165.5 467.5L165.5 463.4M148.6 474.5L152.3 474.5L150.5 474.5L150.5 482.2M538 352.5L555.5 352.5L555.5 369.5L549.5 369.5L549.5 381.5L532.5 381.5L532.5 363.5L538.5 363.5L538.5 352.3M588 367.5L578.5 367.5L578.5 381.5L588 381.5M596.1 352.5L619.5 352.5L619.5 364.5L606.5 364.5L606.5 374.5L599.5 374.5L599.5 381.5L586.7 381.5M948 493.5H1006.3"/>
<path fill="none" stroke="#808080" stroke-width="1.1" d="M156.7 472.5H172.4M156.7 475.5H172.4M156.7 479.5H172.4M142.9 484.5H172.4M142.9 487.5H172.4M142.9 491.5H172.4M142.9 495.5H172.4M142.9 499.5H172.4M142.9 502.5H172.4M142.9 506.5H172.4M976.8 470.5H993.7M976.8 474.5H993.7M976.8 478.5H993.7M976.8 482.5H993.7M976.8 483.5H1006.3M976.8 487.5H1006.3M976.8 490.5H1006.3M976.8 494.5H1006.3M976.8 498.5H1006.3M976.8 502.5H1006.3"/>
<path fill="none" stroke="#808080" stroke-width="2" d="M328.2 397.6V433.1M385 397.6V433.1M653.8 382L653.8 398L664.4 398L661.9 402"/>
<path fill="none" stroke="#808080" stroke-width="0.9" d="M470.6 498.5L473.1 498.5L471.5 498.5L471.5 502.3M459.7 517.5L462.8 517.5L461.5 517.5L461.5 513.3M677.2 498.5L680.1 498.5L678.5 498.5L678.5 502.3M687 515.5L690.1 515.5L688.5 515.5L688.5 512M983.1 467.5L986.9 467.5L984.5 467.5L984.5 463.4M998.1 474.5L1001.9 474.5L1000.5 474.5L1000.5 480.9"/>
<path fill="#000000" d="M538 352.3L555.6 352.3L555.6 369.2L549.3 369.2L549.3 381.7L532.4 381.7L532.4 363.5L538 363.5ZM578.1 367.9L588 367.9L588 381.7L578.1 381.7ZM596.1 352.3L619.3 352.3L619.3 364.8L606.8 364.8L606.8 374.2L599.9 374.2L599.9 381.7L586.7 381.7L586.7 367.9L588 367.9L588 359.2L596.1 359.2Z"/>
<path fill="#212830" d="M140.3 312.8H141.2V324.7H140.3ZM140.3 347.3H141V359.2H140.3ZM174.6 335.9H176.1V337H174.6ZM213.7 322.8H215.2V330.3H213.7ZM263 301.5H263.8V315.3H263ZM165.8 378.2H169.4V379.1H165.8ZM171.4 378.2H174.9V379.1H171.4ZM176.9 378.2H180.4V379.1H176.9ZM182.4 378.2H185.9V379.1H182.4ZM187.9 378.2H191.4V379.1H187.9ZM140.3 418.3H141V425.8H140.3ZM140.3 467.2H141V477.2H140.3ZM171.4 397H179.6V398.5H171.4ZM228.5 397H237.5V398.5H228.5ZM175.1 492.5H211.8V493.7H175.1ZM212.5 451.9H252.6V452.9H212.5ZM147.3 522.3H156.1V523H147.3ZM175.5 523H211.8V524.2H175.5ZM269.6 297.6H282.1V298.5H269.6ZM285 297.6H297.5V298.5H285ZM300.4 297.6H313V298.5H300.4ZM315.8 297.6H328.4V298.5H315.8ZM331.3 297.6H343.8V298.5H331.3ZM346.7 297.6H359.2V298.5H346.7ZM362.1 297.6H374.6V298.5H362.1ZM377.5 297.6H390V298.5H377.5ZM392.9 297.6H405.4V298.5H392.9ZM408.3 297.6H420.9V298.5H408.3ZM423.7 297.6H436.3V298.5H423.7ZM304.9 304H305.8V324.1H304.9ZM367 364.2H368.5V376.7H367ZM287.8 305.3H290V307.2H287.8ZM318.8 396.7H327.9V398.5H318.8ZM328.9 396.7H337.9V398.5H328.9ZM385.5 396.7H394.3V398.5H385.5ZM294.4 451.6H303.8V453.6H294.4ZM326.1 451.6H335.1V453.6H326.1ZM337.4 451.6H346.4V453.6H337.4ZM388 451.6H397.8V453.6H388ZM417.8 451.6H427.2V453.6H417.8ZM366.2 505.1H367.5V520.2H366.2ZM447.5 297.6H459.1V298.5H447.5ZM462.8 297.6H474.4V298.5H462.8ZM478.2 297.6H489.8V298.5H478.2ZM503.3 297.6H514.8V298.5H503.3ZM444.7 304H445.5V324.1H444.7ZM449.3 451.1H484.8V452.4H449.3ZM445 459H447.5V466.5H445ZM445 469.7H447.5V488.5H445ZM449.7 489.6H510.4V490.6H449.7ZM572.5 483.7H573.5V484.7H572.5ZM572.5 486.2H573.5V487.2H572.5ZM575.4 483.7H576.4V484.7H575.4ZM575.4 486.2H576.4V487.2H575.4ZM502.3 533.3H514.8V534.4H502.3ZM650 297.6H662.6V298.5H650ZM665.1 297.6H677.6V298.5H665.1ZM680.1 297.6H692.6V298.5H680.1ZM695.8 297.6H708.3V298.5H695.8ZM710.8 297.6H723.3V298.5H710.8ZM725.8 297.6H738.4V298.5H725.8ZM657.5 380.3H663.8V381.2H657.5ZM668.2 380.3H674.5V381.2H668.2ZM684.5 380.3H690.8V381.2H684.5ZM692 380.3H698.3V381.2H692ZM639.4 451.1H670.7V452.4H639.4ZM638.8 489.6H703.9V490.6H638.8ZM730.2 412.3H732.7V414.5H730.2ZM730.2 420.5H732.7V422.8H730.2ZM735.2 412.3H737.7V414.5H735.2ZM735.2 420.5H737.7V422.8H735.2ZM740.3 412.3H742.8V414.5H740.3ZM740.3 420.5H742.8V422.8H740.3ZM635 533.3H647.9V534.4H635ZM887.4 320.9H888.1V344.1H887.4ZM742 297.6H754.5V298.5H742ZM757.3 297.6H769.8V298.5H757.3ZM772.7 297.6H785.2V298.5H772.7ZM788.4 297.6H800.9V298.5H788.4ZM803.4 297.6H815.9V298.5H803.4ZM818.4 297.6H831V298.5H818.4ZM834.1 297.6H846.6V298.5H834.1ZM849.8 297.6H862.3V298.5H849.8ZM749.5 346.9H754.5V347.6H749.5ZM760.8 346.9H765.8V347.6H760.8ZM797.1 346.9H802.2V347.6H797.1ZM812.2 346.9H817.2V347.6H812.2ZM858.5 346.9H863.6V347.6H858.5ZM872.3 346.9H877.3V347.6H872.3ZM859.5 305.9H861.7V306.8H859.5ZM739.7 412.2H742.8V414.7H739.7ZM744.8 412.2H747.8V414.7H744.8ZM749.9 412.2H752.9V414.7H749.9ZM755 412.2H758V414.7H755ZM760 412.2H763.1V414.7H760ZM765.1 412.2H768.1V414.7H765.1ZM770.2 412.2H773.2V414.7H770.2ZM775.3 412.2H778.3V414.7H775.3ZM780.3 412.2H783.4V414.7H780.3ZM785.4 412.2H788.4V414.7H785.4ZM739.7 420.4H742.8V422.9H739.7ZM744.8 420.4H747.8V422.9H744.8ZM749.9 420.4H752.9V422.9H749.9ZM755 420.4H758V422.9H755ZM760 420.4H763.1V422.9H760ZM765.1 420.4H768.1V422.9H765.1ZM770.2 420.4H773.2V422.9H770.2ZM775.3 420.4H778.3V422.9H775.3ZM780.3 420.4H783.4V422.9H780.3ZM785.4 420.4H788.4V422.9H785.4ZM828.7 412.2H831.7V414.7H828.7ZM833.8 412.2H836.8V414.7H833.8ZM838.9 412.2H841.9V414.7H838.9ZM843.9 412.2H846.9V414.7H843.9ZM849 412.2H852V414.7H849ZM854.1 412.2H857.1V414.7H854.1ZM859.2 412.2H862.2V414.7H859.2ZM864.2 412.2H867.3V414.7H864.2ZM869.3 412.2H872.3V414.7H869.3ZM874.4 412.2H877.4V414.7H874.4ZM879.5 412.2H882.5V414.7H879.5ZM884.5 412.2H887.6V414.7H884.5ZM828.7 420.4H831.7V422.9H828.7ZM833.8 420.4H836.8V422.9H833.8ZM838.9 420.4H841.9V422.9H838.9ZM843.9 420.4H846.9V422.9H843.9ZM849 420.4H852V422.9H849ZM854.1 420.4H857.1V422.9H854.1ZM859.2 420.4H862.2V422.9H859.2ZM864.2 420.4H867.3V422.9H864.2ZM869.3 420.4H872.3V422.9H869.3ZM874.4 420.4H877.4V422.9H874.4ZM879.5 420.4H882.5V422.9H879.5ZM884.5 420.4H887.6V422.9H884.5ZM799.6 485.7H803.4V486.5H799.6ZM809.7 485.7H813.4V486.5H809.7ZM819.7 485.7H823.5V486.5H819.7ZM858.5 485.7H862.3V486.5H858.5ZM868.6 485.7H872.3V486.5H868.6ZM871.1 533.3H886.1V534.4H871.1ZM858.5 524.5H861.9V525.4H858.5ZM888.9 509.1H899.9V512.6H888.9ZM901.3 310.9H902V317.2H901.3ZM1007.9 314.1H1009.5V323.4H1007.9ZM1007.9 349.1H1009.5V359.2H1007.9ZM1007.9 418.3H1009.5V424.6H1007.9ZM1007.9 432.1H1009.5V439H1007.9ZM1007.9 442.1H1009.5V448.4H1007.9ZM948 492.6H1006.3V493.7H948ZM982.5 522.3H988.1V523H982.5ZM939.2 523H973.7V524.2H939.2Z"/>
<path fill="none" stroke="#212830" stroke-width="0.9" d="M526 519.2L528.2 516.8M531.2 519.2L533.4 516.8M536.4 519.2L538.6 516.8M541.6 519.2L543.8 516.8M546.8 519.2L549 516.8M552 519.2L554.2 516.8M557.2 519.2L559.4 516.8M562.4 519.2L564.6 516.8M567.6 519.2L569.8 516.8M581 519.2L583.2 516.8M586.2 519.2L588.4 516.8M591.4 519.2L593.6 516.8M596.6 519.2L598.8 516.8M601.8 519.2L604 516.8M607 519.2L609.2 516.8M612.2 519.2L614.4 516.8M617.4 519.2L619.6 516.8M622.6 519.2L624.8 516.8"/>
<path fill="none" stroke="#212830" stroke-width="0.8" d="M702.5 314.5H704.5V320.5H702.5ZM705.5 314.5H707.5V320.5H705.5ZM702.5 323.5H704.5V329.5H702.5ZM705.5 323.5H707.5V329.5H705.5ZM779.5 314.5H781.5V320.5H779.5ZM783.5 314.5H785.5V320.5H783.5ZM779.5 323.5H781.5V329.5H779.5ZM783.5 323.5H785.5V329.5H783.5Z"/>
<path fill="#808080" d="M543.6 357.3H552V366.3H543.6ZM537.4 364.2H545.2V377H537.4ZM554.3 364.8H558.9V368.2H554.3ZM572.2 377.1H578.1V382H572.2ZM582.5 367.9H588V376.7H582.5ZM583.1 350H588V352.9H583.1ZM601.2 357.3H613.9V364.4H601.2ZM594.3 362.3H602.7V370.7H594.3ZM586.7 370.4H595.8V377.6H586.7ZM605.5 370.4H610.2V373.4H605.5ZM586.7 350H593V352.9H586.7Z"/>
<path fill="none" stroke="#808080" stroke-width="1" d="M552 361.7L557.4 365.4M588 354.2A3.8 3.8 0 0 0 588 361M606.8 365.4L608.1 370.7M588 354.2A3.8 3.8 0 0 1 588 361"/>
<path fill="none" stroke="#00ffff" stroke-width="1.2" d="M30.5 13.5H1191.5V833.5H30.5Z"/>
<path fill="none" stroke="#00ffff" stroke-width="2.3" d="M64.9 27H1177.7V819.3H64.9Z"/>
<path fill="none" stroke="#00ffff" stroke-width="1" d="M200.2 389.5H275.1M200.2 442.5H274.1M196.5 445.9L196.5 489.5L202.5 489.5L202.5 499.5L210 499.5M291.9 389.5H377.7M383.8 389.5H434M280 442.5H434M434 389.5H469.7M472.5 393V402M472.5 402V442.5M434 442.5H469.7M710.2 396.5H745.9M707.5 398.6V402M707.5 402V432.1M738.2 396.5H795.9M799.5 399V402M891.5 399V402M799.5 402V432.1M891.5 402V432.1M802.4 435.5H888M887.9 396.5H939.9M946.1 396.5L973.5 396.5L973.5 402M973.5 402V413.5M973.9 419.5L955.5 419.5L955.5 470.3M952.6 473.5L947.5 473.5L947.5 499.5L940.6 499.5"/>
<path fill="#ff00ff" d="M142.1 387.4L143.7 391.2L146.7 393.2L149.7 391.2L151.3 387.4ZM142.1 444.1L143.7 447.9L146.7 449.9L149.7 447.9L151.3 444.1ZM209.3 494.1L212.5 495.7L212.5 498.5L209.3 498.5ZM506.1 386.1L513.6 384.2L513.6 390.5L508.6 391.1ZM506.1 442.1L512.3 441.5L513.6 449L509.2 446.5ZM622.5 336.6L625.6 331.6L630 332.2L626.8 336.6ZM675.1 347.9L680.7 350.4L683.2 352.9L678.2 353.5ZM655.7 383L663.2 386.1L661.9 389.9L657.5 388ZM722.1 482.8L730.9 478.4L732.1 482.2L724.6 486ZM924.6 352.3L933.6 347.9L934.8 351L929.8 354.8ZM924.6 387.4L933.6 383L934.8 386.1L929.8 389.9ZM951.1 377L954.9 378.6L954.9 380.5L951.1 382.1ZM998.1 371.1L1006 374.5L1001 378.2ZM999 390.7L1005.8 385.7L1007 388.7L1002.5 393.2ZM924.6 443.4L932.3 445.2L931.7 449L926.7 447.1ZM926.1 478.4L936.1 482.8L932.3 485.3L927.3 483.5ZM938 494.7L943 494.1L943 499.1L940.1 499.1Z"/>
<path fill="none" stroke="#ff00ff" stroke-width="1" d="M174.5 678.5H183.5V685.5H174.5ZM183.3 683.5L184.5 683.5L184.5 681.5L186.7 681.5M172.5 693.1L173.9 697.6L177 698.5L182.5 698.5L185.5 697.6L186.5 693.1M176.5 698.6A3.4 3.4 0 0 0 182.5 698.6M800.5 678.5H809.5V685.5H800.5ZM809.1 683.5L810.5 683.5L810.5 681.5L812.6 681.5M798.4 693.1L799.8 697.6L802.9 698.5L808.4 698.5L811.4 697.6L812.4 693.1M802.4 698.6A3.4 3.4 0 0 0 808.4 698.6M151.1 386.5L275.5 386.5L275.5 402M279.5 386.9V402M145.5 383.8V387.4M279.5 400.7V446.5M666.5 383.8V386.9"/>
<path fill="none" stroke="#ff00ff" stroke-width="0.8" d="M177.9 681.8A1.5 1.5 0 0 1 180.7 681.8M181.3 695.9a1.2 1.2 0 1 0 2.4 0a1.2 1.2 0 1 0 -2.4 0ZM803.8 681.8A1.5 1.5 0 0 1 806.6 681.8M807.1 695.9a1.2 1.2 0 1 0 2.4 0a1.2 1.2 0 1 0 -2.4 0Z"/>
<path fill="none" stroke="#ff00ff" stroke-width="1.1" d="M171.5 693.5L186.9 693.5M797.4 693.5L812.8 693.5M140.7 387.5H152.7M140.7 444.5H152.7M275.5 400.7L275.5 446.5L205.5 446.5L205.5 497.5L210.2 497.5M280 450.5L209.5 450.5L209.5 496M280 386.5H434M434 386.5H509.2M668.2 386.5H745.9M738.2 386.5H899.9M887.9 386.5H933.6"/>
<path fill="none" stroke="#ff00ff" stroke-width="0.9" d="M176.5 693.9V697.6M801.5 693.9V697.6"/>
<path fill="none" stroke="#ff00ff" stroke-width="1.3" d="M145.4 383.5H280M280 383.5H434M434 383.5H513.9M666.3 383.5H745.9M738.2 383.5H899.9M887.9 383.5H933.6"/>
<path fill="none" stroke="#ff00ff" stroke-width="1.2" d="M280 446.5L427.5 446.5L427.5 450.5L280 450.5M666.3 445.5H745.9M666.3 448.5H745.9M738.2 445.5H899.9M738.2 448.5H899.9M933.6 383.5L940.5 383.5L940.5 377.5L951.8 377.5M936.1 386.5L940.5 386.5L940.5 402M951.8 381.5L943.5 381.5L943.5 402M887.9 445.5H924.6M887.9 448.5L940.5 448.5L940.5 499.5L943.5 499.5L943.5 400.7M940.5 400.7L940.5 445.5L936.7 445.5"/>
<path fill="#00ff00" d="M1009.6 291.5H1010.6V292.8H1009.6ZM262.5 291.8H263.5V292.9H262.5ZM885.5 291.8H886.5V292.9H885.5ZM1009.6 544H1010.6V545.2H1009.6ZM262.9 544H263.9V545.2H262.9ZM885.9 544H886.9V545.2H885.9ZM123.8 298.9H125V299.9H123.8ZM123.8 532.8H125V533.8H123.8ZM1016.6 298.9H1017.8V299.9H1016.6ZM1016.6 532.8H1017.8V533.8H1016.6ZM175.2 707.4H183.9V715.4H175.2ZM175.2 721.9H183.9V729.9H175.2ZM175.2 736.4H183.9V744.4H175.2ZM175.7 755.1a3.8 3.8 0 1 0 7.6 0a3.8 3.8 0 1 0 -7.6 0ZM177.5 757.6H181.5V759.5H177.5ZM175.7 769.6a3.8 3.8 0 1 0 7.6 0a3.8 3.8 0 1 0 -7.6 0ZM177.5 772.1H181.5V774H177.5ZM175.7 784.1a3.8 3.8 0 1 0 7.6 0a3.8 3.8 0 1 0 -7.6 0ZM177.5 786.6H181.5V788.5H177.5ZM176.3 796.4H182.7V798.6H176.3ZM177.9 800H181.1V801.7H177.9ZM801.1 707.4H809.8V715.4H801.1ZM801.1 721.9H809.8V729.9H801.1ZM801.1 736.4H809.8V744.4H801.1ZM801.6 755.1a3.8 3.8 0 1 0 7.6 0a3.8 3.8 0 1 0 -7.6 0ZM803.4 757.6H807.4V759.5H803.4ZM801.6 769.6a3.8 3.8 0 1 0 7.6 0a3.8 3.8 0 1 0 -7.6 0ZM803.4 772.1H807.4V774H803.4ZM801.6 784.1a3.8 3.8 0 1 0 7.6 0a3.8 3.8 0 1 0 -7.6 0ZM803.4 786.6H807.4V788.5H803.4ZM802.1 796.4H808.6V798.6H802.1ZM803.8 800H807V801.7H803.8ZM147.9 310.3H164V315.6H147.9ZM206.2 312.2H212.2V356.4H206.2ZM196.2 349.1H198.9V383.6H196.2ZM141 347.9H146.8V377.7H141ZM220.9 319.4H236.9V324.7H220.9ZM213.1 347.9H218.9V377.7H213.1ZM219.4 355.4H222V383.6H219.4ZM263.8 335.4H269.6V379.2H263.8ZM193.4 388.8H200.2V391H193.4ZM195.2 392.6H198.4V394.2H195.2ZM206.2 413.9a2.5 2.5 0 1 0 5 0a2.5 2.5 0 1 0 -5 0ZM206.2 418.5a2.5 2.5 0 1 0 5 0a2.5 2.5 0 1 0 -5 0ZM193.4 441.5H200.2V443.7H193.4ZM195.2 445.3H198.4V446.9H195.2ZM213.1 457.1H218.9V486.7H213.1ZM263.8 453.4H269.6V497.2H263.8ZM218.1 506.1H234V511.6H218.1ZM279.4 316.3H286.9V320.8H279.4ZM310.1 300H326.1V305.9H310.1ZM305.1 329.1H310.8V359.2H305.1ZM359.9 332.2H366V347.9H359.9ZM367.1 332.2H373.1V347.9H367.1ZM359.9 349.1H366V363.7H359.9ZM367.1 349.1H373.1V363.7H367.1ZM423.1 300H434V305.9H423.1ZM285.4 388.8H292.2V391H285.4ZM287.2 392.6H290.4V394.2H287.2ZM377.2 388.8H384V391H377.2ZM379 392.6H382.2V394.2H379ZM364.2 414.5a2.5 2.5 0 1 0 5 0a2.5 2.5 0 1 0 -5 0ZM364.2 418.9a2.5 2.5 0 1 0 5 0a2.5 2.5 0 1 0 -5 0ZM365.8 449H367.8V472.2H365.8ZM305.1 470.3H310.8V499.1H305.1ZM359.9 472.2H373.1V495.4H359.9ZM398.4 472.2H404.1V499.1H398.4ZM285.4 441.7H292.2V443.9H285.4ZM287.2 445.5H290.4V447.1H287.2ZM377.5 441.7H384.3V443.9H377.5ZM379.3 445.5H382.5V447.1H379.3ZM310.1 527H326.1V532.7H310.1ZM343.9 527H360.8V532.7H343.9ZM372.1 527H388.1V532.7H372.1ZM402.2 527H418.2V532.7H402.2ZM433.4 300H439V305.9H433.4ZM450.3 300H466.1V305.9H450.3ZM438.4 327.2H444V370.7H438.4ZM445.3 327.2H451V356.7H445.3ZM492.3 300H507.9V305.9H492.3ZM510.2 329.1H516.1V372.9H510.2ZM469.7 388.8H476.5V391H469.7ZM471.5 392.6H474.7V394.2H471.5ZM568.6 471.8a2.6 2.6 0 1 0 5.3 0a2.6 2.6 0 1 0 -5.3 0ZM574 471.8a2.6 2.6 0 1 0 5.3 0a2.6 2.6 0 1 0 -5.3 0ZM568.6 497.9a2.6 2.6 0 1 0 5.3 0a2.6 2.6 0 1 0 -5.3 0ZM574 497.9a2.6 2.6 0 1 0 5.3 0a2.6 2.6 0 1 0 -5.3 0ZM535.1 482.2a2.6 2.6 0 1 0 5.3 0a2.6 2.6 0 1 0 -5.3 0ZM535.1 487.2a2.6 2.6 0 1 0 5.3 0a2.6 2.6 0 1 0 -5.3 0ZM469.7 441.8H476.5V444H469.7ZM471.5 445.6H474.7V447.2H471.5ZM674.5 300H680.2V329.3H674.5ZM680.1 329.3H682.2V382.5H680.1ZM730.2 300H735.4V329.3H730.2ZM736.2 300H743.9V329.3H736.2ZM736.2 329.3H743.9V343.6H736.2ZM711.6 374.2a3 3 0 1 0 6 0a3 3 0 1 0 -6 0ZM715.9 374.2a3 3 0 1 0 6 0a3 3 0 1 0 -6 0ZM721.8 374.2a3 3 0 1 0 6 0a3 3 0 1 0 -6 0ZM726.8 374.2a3 3 0 1 0 6 0a3 3 0 1 0 -6 0ZM732.5 374.2a3 3 0 1 0 6 0a3 3 0 1 0 -6 0ZM736.9 374.2a3 3 0 1 0 6 0a3 3 0 1 0 -6 0ZM703.4 394.6H710.2V396.8H703.4ZM705.2 398.4H708.4V400H705.2ZM654.4 437.7H660.3V445.5H654.4ZM606.9 482.2a2.6 2.6 0 1 0 5.3 0a2.6 2.6 0 1 0 -5.3 0ZM606.9 487.2a2.6 2.6 0 1 0 5.3 0a2.6 2.6 0 1 0 -5.3 0ZM722.8 459.3a2.8 2.8 0 1 0 5.5 0a2.8 2.8 0 1 0 -5.5 0ZM728.1 459.3a2.8 2.8 0 1 0 5.5 0a2.8 2.8 0 1 0 -5.5 0ZM733.7 459.3a2.8 2.8 0 1 0 5.5 0a2.8 2.8 0 1 0 -5.5 0ZM738.8 459.3a2.8 2.8 0 1 0 5.5 0a2.8 2.8 0 1 0 -5.5 0ZM720.8 489.1H726.6V510H720.8ZM703.4 434.1H710.2V436.3H703.4ZM705.2 437.9H708.4V439.5H705.2ZM623.1 510.8H629V521.4H623.1ZM720.8 489.4H726.6V518.3H720.8ZM741.4 306.5H744V382.5H741.4ZM807.2 300H812.9V328.6H807.2ZM813.6 300H819.2V328.6H813.6ZM879.8 300H885.7V329.3H879.8ZM744.6 374.2a3 3 0 1 0 6 0a3 3 0 1 0 -6 0ZM749.3 374.2a3 3 0 1 0 6 0a3 3 0 1 0 -6 0ZM754.7 374.2a3 3 0 1 0 6 0a3 3 0 1 0 -6 0ZM759.7 374.2a3 3 0 1 0 6 0a3 3 0 1 0 -6 0ZM764.7 374.2a3 3 0 1 0 6 0a3 3 0 1 0 -6 0ZM769.9 374.2a3 3 0 1 0 6 0a3 3 0 1 0 -6 0ZM788.5 374.2a3 3 0 1 0 6 0a3 3 0 1 0 -6 0ZM793.8 374.2a3 3 0 1 0 6 0a3 3 0 1 0 -6 0ZM799.1 374.2a3 3 0 1 0 6 0a3 3 0 1 0 -6 0ZM804.2 374.2a3 3 0 1 0 6 0a3 3 0 1 0 -6 0ZM809.2 374.2a3 3 0 1 0 6 0a3 3 0 1 0 -6 0ZM814.2 374.2a3 3 0 1 0 6 0a3 3 0 1 0 -6 0ZM821.7 374.2a3 3 0 1 0 6 0a3 3 0 1 0 -6 0ZM826.7 374.2a3 3 0 1 0 6 0a3 3 0 1 0 -6 0ZM832 374.2a3 3 0 1 0 6 0a3 3 0 1 0 -6 0ZM837 374.2a3 3 0 1 0 6 0a3 3 0 1 0 -6 0ZM842 374.2a3 3 0 1 0 6 0a3 3 0 1 0 -6 0ZM847 374.2a3 3 0 1 0 6 0a3 3 0 1 0 -6 0ZM866.2 374.2a3 3 0 1 0 6 0a3 3 0 1 0 -6 0ZM870.8 374.2a3 3 0 1 0 6 0a3 3 0 1 0 -6 0ZM876.2 374.2a3 3 0 1 0 6 0a3 3 0 1 0 -6 0ZM881.2 374.2a3 3 0 1 0 6 0a3 3 0 1 0 -6 0ZM886.5 374.2a3 3 0 1 0 6 0a3 3 0 1 0 -6 0ZM891.2 374.2a3 3 0 1 0 6 0a3 3 0 1 0 -6 0ZM795.6 394.8H802.4V397H795.6ZM797.4 398.6H800.6V400.2H797.4ZM887.7 394.8H894.5V397H887.7ZM889.5 398.6H892.7V400.2H889.5ZM744.1 459a2.9 2.9 0 1 0 5.8 0a2.9 2.9 0 1 0 -5.8 0ZM748.8 459a2.9 2.9 0 1 0 5.8 0a2.9 2.9 0 1 0 -5.8 0ZM754.4 459a2.9 2.9 0 1 0 5.8 0a2.9 2.9 0 1 0 -5.8 0ZM759.4 459a2.9 2.9 0 1 0 5.8 0a2.9 2.9 0 1 0 -5.8 0ZM764.4 459a2.9 2.9 0 1 0 5.8 0a2.9 2.9 0 1 0 -5.8 0ZM769.8 459a2.9 2.9 0 1 0 5.8 0a2.9 2.9 0 1 0 -5.8 0ZM788.6 459a2.9 2.9 0 1 0 5.8 0a2.9 2.9 0 1 0 -5.8 0ZM793.9 459a2.9 2.9 0 1 0 5.8 0a2.9 2.9 0 1 0 -5.8 0ZM799.3 459a2.9 2.9 0 1 0 5.8 0a2.9 2.9 0 1 0 -5.8 0ZM804.3 459a2.9 2.9 0 1 0 5.8 0a2.9 2.9 0 1 0 -5.8 0ZM809.3 459a2.9 2.9 0 1 0 5.8 0a2.9 2.9 0 1 0 -5.8 0ZM814.3 459a2.9 2.9 0 1 0 5.8 0a2.9 2.9 0 1 0 -5.8 0ZM821.8 459a2.9 2.9 0 1 0 5.8 0a2.9 2.9 0 1 0 -5.8 0ZM826.8 459a2.9 2.9 0 1 0 5.8 0a2.9 2.9 0 1 0 -5.8 0ZM832.1 459a2.9 2.9 0 1 0 5.8 0a2.9 2.9 0 1 0 -5.8 0ZM837.1 459a2.9 2.9 0 1 0 5.8 0a2.9 2.9 0 1 0 -5.8 0ZM842.1 459a2.9 2.9 0 1 0 5.8 0a2.9 2.9 0 1 0 -5.8 0ZM847.1 459a2.9 2.9 0 1 0 5.8 0a2.9 2.9 0 1 0 -5.8 0ZM866.3 459a2.9 2.9 0 1 0 5.8 0a2.9 2.9 0 1 0 -5.8 0ZM870.9 459a2.9 2.9 0 1 0 5.8 0a2.9 2.9 0 1 0 -5.8 0ZM876.3 459a2.9 2.9 0 1 0 5.8 0a2.9 2.9 0 1 0 -5.8 0ZM881.3 459a2.9 2.9 0 1 0 5.8 0a2.9 2.9 0 1 0 -5.8 0ZM886.6 459a2.9 2.9 0 1 0 5.8 0a2.9 2.9 0 1 0 -5.8 0ZM891.4 459a2.9 2.9 0 1 0 5.8 0a2.9 2.9 0 1 0 -5.8 0ZM844.3 459H845.5V487.2H844.3ZM777.1 489.1H782.9V510H777.1ZM807.2 502.3H819.2V510H807.2ZM880.5 502.3H886.1V510H880.5ZM795.6 433.6H802.4V435.8H795.6ZM797.4 437.4H800.6V439H797.4ZM887.7 433.6H894.5V435.8H887.7ZM889.5 437.4H892.7V439H889.5ZM777.1 489.4H782.9V518.4H777.1ZM807.2 502.6H819.2V532.7H807.2ZM880.5 502.6H886.1V532.7H880.5ZM905.4 341.4H936.9V346.1H905.4ZM893 374.2a3 3 0 1 0 6 0a3 3 0 1 0 -6 0ZM900.5 374.2a3 3 0 1 0 6 0a3 3 0 1 0 -6 0ZM905.5 374.2a3 3 0 1 0 6 0a3 3 0 1 0 -6 0ZM910.5 374.2a3 3 0 1 0 6 0a3 3 0 1 0 -6 0ZM915.5 374.2a3 3 0 1 0 6 0a3 3 0 1 0 -6 0ZM920.6 374.2a3 3 0 1 0 6 0a3 3 0 1 0 -6 0ZM925.8 374.2a3 3 0 1 0 6 0a3 3 0 1 0 -6 0ZM945.1 310.3H1007V316.1H945.1ZM945.1 340.4H1007V345.8H945.1ZM939.9 317.2H944.4V378H939.9ZM939.9 316.6H1000.3V318.6H939.9ZM939.9 336H1000.3V338.1H939.9ZM893.2 459a2.8 2.8 0 1 0 5.5 0a2.8 2.8 0 1 0 -5.5 0ZM900.8 459a2.8 2.8 0 1 0 5.5 0a2.8 2.8 0 1 0 -5.5 0ZM905.8 459a2.8 2.8 0 1 0 5.5 0a2.8 2.8 0 1 0 -5.5 0ZM910.8 459a2.8 2.8 0 1 0 5.5 0a2.8 2.8 0 1 0 -5.5 0ZM915.8 459a2.8 2.8 0 1 0 5.5 0a2.8 2.8 0 1 0 -5.5 0ZM920.8 459a2.8 2.8 0 1 0 5.5 0a2.8 2.8 0 1 0 -5.5 0ZM926.1 459a2.8 2.8 0 1 0 5.5 0a2.8 2.8 0 1 0 -5.5 0ZM905.4 487.8H936.9V492.5H905.4ZM930.5 438.3H936.9V445.4H930.5ZM970.5 415.2H977.3V417.4H970.5ZM972.3 419H975.5V420.6H972.3ZM952.5 472.7H959.3V474.9H952.5ZM954.3 476.5H957.5V478.1H954.3Z"/>
<path fill="none" stroke="#00ff00" stroke-width="1.2" d="M135.2 250.2a5.4 5.4 0 1 0 10.8 0a5.4 5.4 0 1 0 -10.8 0ZM206.7 250.2a5.4 5.4 0 1 0 10.8 0a5.4 5.4 0 1 0 -10.8 0ZM284.1 250.2a5.4 5.4 0 1 0 10.8 0a5.4 5.4 0 1 0 -10.8 0ZM361.5 250.2a5.4 5.4 0 1 0 10.8 0a5.4 5.4 0 1 0 -10.8 0ZM438.6 250.2a5.4 5.4 0 1 0 10.8 0a5.4 5.4 0 1 0 -10.8 0ZM505.1 250.2a5.4 5.4 0 1 0 10.8 0a5.4 5.4 0 1 0 -10.8 0ZM519.5 250.2a5.4 5.4 0 1 0 10.8 0a5.4 5.4 0 1 0 -10.8 0ZM568.9 250.2a5.4 5.4 0 1 0 10.8 0a5.4 5.4 0 1 0 -10.8 0ZM618.8 250.2a5.4 5.4 0 1 0 10.8 0a5.4 5.4 0 1 0 -10.8 0ZM633.2 250.2a5.4 5.4 0 1 0 10.8 0a5.4 5.4 0 1 0 -10.8 0ZM699.7 250.2a5.4 5.4 0 1 0 10.8 0a5.4 5.4 0 1 0 -10.8 0ZM776.9 250.2a5.4 5.4 0 1 0 10.8 0a5.4 5.4 0 1 0 -10.8 0ZM854 250.2a5.4 5.4 0 1 0 10.8 0a5.4 5.4 0 1 0 -10.8 0ZM931.7 250.2a5.4 5.4 0 1 0 10.8 0a5.4 5.4 0 1 0 -10.8 0ZM1003.1 250.2a5.4 5.4 0 1 0 10.8 0a5.4 5.4 0 1 0 -10.8 0ZM134.9 594.4a5.4 5.4 0 1 0 10.8 0a5.4 5.4 0 1 0 -10.8 0ZM167.7 594.4a5.4 5.4 0 1 0 10.8 0a5.4 5.4 0 1 0 -10.8 0ZM206.7 594.4a5.4 5.4 0 1 0 10.8 0a5.4 5.4 0 1 0 -10.8 0ZM284 594.4a5.4 5.4 0 1 0 10.8 0a5.4 5.4 0 1 0 -10.8 0ZM361.7 594.4a5.4 5.4 0 1 0 10.8 0a5.4 5.4 0 1 0 -10.8 0ZM438.8 594.4a5.4 5.4 0 1 0 10.8 0a5.4 5.4 0 1 0 -10.8 0ZM505.3 594.4a5.4 5.4 0 1 0 10.8 0a5.4 5.4 0 1 0 -10.8 0ZM519.7 594.4a5.4 5.4 0 1 0 10.8 0a5.4 5.4 0 1 0 -10.8 0ZM569.2 594.4a5.4 5.4 0 1 0 10.8 0a5.4 5.4 0 1 0 -10.8 0ZM618.7 594.4a5.4 5.4 0 1 0 10.8 0a5.4 5.4 0 1 0 -10.8 0ZM633.1 594.4a5.4 5.4 0 1 0 10.8 0a5.4 5.4 0 1 0 -10.8 0ZM699.7 594.4a5.4 5.4 0 1 0 10.8 0a5.4 5.4 0 1 0 -10.8 0ZM776.9 594.4a5.4 5.4 0 1 0 10.8 0a5.4 5.4 0 1 0 -10.8 0ZM854 594.4a5.4 5.4 0 1 0 10.8 0a5.4 5.4 0 1 0 -10.8 0ZM931.7 594.4a5.4 5.4 0 1 0 10.8 0a5.4 5.4 0 1 0 -10.8 0ZM970.5 594.4a5.4 5.4 0 1 0 10.8 0a5.4 5.4 0 1 0 -10.8 0ZM1003.3 594.4a5.4 5.4 0 1 0 10.8 0a5.4 5.4 0 1 0 -10.8 0ZM68.1 308.2a5.4 5.4 0 1 0 10.8 0a5.4 5.4 0 1 0 -10.8 0ZM1059.4 308.2a5.4 5.4 0 1 0 10.8 0a5.4 5.4 0 1 0 -10.8 0ZM68.1 380.1a5.4 5.4 0 1 0 10.8 0a5.4 5.4 0 1 0 -10.8 0ZM1059.4 380.1a5.4 5.4 0 1 0 10.8 0a5.4 5.4 0 1 0 -10.8 0ZM68.1 452.2a5.4 5.4 0 1 0 10.8 0a5.4 5.4 0 1 0 -10.8 0ZM1059.4 452.2a5.4 5.4 0 1 0 10.8 0a5.4 5.4 0 1 0 -10.8 0ZM68.1 523.6a5.4 5.4 0 1 0 10.8 0a5.4 5.4 0 1 0 -10.8 0ZM1059.4 523.6a5.4 5.4 0 1 0 10.8 0a5.4 5.4 0 1 0 -10.8 0Z"/>
<path fill="none" stroke="#00ff00" stroke-width="1" d="M140.5 255.6V292.8M212.5 255.6V292.8M289.5 255.6V292.8M366.5 255.6V292.8M444.5 255.6V292.8M516.5 253.5V292.8M519.5 253.5V292.8M574.5 255.6V292.8M630.5 253.5V292.8M633.5 253.5V292.8M705.5 255.6V292.8M782.5 255.6V292.8M859.5 255.6V292.8M937.5 255.6V292.8M1008.5 255.6V292.8M139.5 258V292.8M1010.5 258V289M139 260.5H1010.4M139 271.5H1010.4M263.5 267V288.8M886.5 267V288.8M140.5 544.2V589M173.5 544.2V589M212.5 544.2V589M289.5 544.2V589M367.5 544.2V589M444.5 544.2V589M516.5 544.2V591M519.5 544.2V591M574.5 544.2V589M630.5 544.2V591M633.5 544.2V591M705.5 544.2V589M782.5 544.2V589M859.5 544.2V589M937.5 544.2V589M975.5 544.2V589M1008.5 544.2V589M139.5 546V585M1010.5 548V585M139 572.5H1010.4M139 580.5H1010.4M263.5 548V577M886.5 548V577M79 308.5H124.8M1011 308.5H1059.3M79 380.5H124.8M1011 380.5H1059.3M79 452.5H124.8M1011 452.5H1059.3M79 523.5H124.8M1011 523.5H1059.3M86.5 307.5V524.3M96.5 298.6V534M93 299.5H120.6M93.5 533.5H120.6M1053.5 307.5V524.3M1042.5 298.6V534M1021 299.5H1046.6M1021 533.5H1046.6M155.5 315.6V383.6M206.2 356.5H212.5M146.5 355.5H148.5V383.5H146.5ZM228.5 324.7V383.6M269.5 343.5H271.5V383.5H269.5ZM209.5 420.8V446.7M149.2 448.5H205.6M173 457.5H206.2M208.7 464.5H213.3M208.7 479.5H213.3M204.6 463.5L201.5 463.5L201.5 470.5L205.8 470.5M226.5 450.2V510M272.5 450.2V510M263.5 450.2V453.4M206.2 504.8L216.9 494.1M318.5 305.9V383.6M310.5 336.5H313.5V383.5H310.5ZM360.2 339.5L357.5 339.5L357.5 383.6M359.5 363.7V383.6M374.5 354.2V383.6M373 339.5L376.5 339.5L376.5 383.6M431.5 305.9V383.6M360.5 495.5H365.5V501.5H360.5ZM367.5 495.5H372.5V501.5H367.5ZM398.5 499.5H404.5V502.5H398.5ZM305.5 448.4V470.3M317.5 450.2V510M352.5 450.2V510M379.5 450.2V510M398.5 450.2V472.2M410.5 450.2V510M317.5 507.6V527.7M352.5 507.6V527.7M379.5 507.6V527.7M410.5 507.6V527.7M457.5 305.9V383.6M451 334.5L455.5 334.5L455.5 383.6M451 349.5L454.5 349.5L454.5 383.6M436.5 349.1V383.6M434.5 349.1V383.6M500.5 305.9V402M510.2 336.5L504.5 336.5L504.5 383.6M510.2 350.5L506.5 350.5L506.5 383.6M508.5 365.4V383.6M502.5 386.5L502.5 389.5L507.9 389.5M500.5 402V442.4M500.4 442.5H507.3M434 498.5H445.9M680.5 306.5H682.5V329.5H680.5ZM730.2 306.5L728.5 306.5L728.5 382.5M742 347.5L735.5 347.5L735.5 382.5M717.5 347.5H719.5V382.5H717.5ZM739.5 347.3V382.5M660.5 442.5H666.5V449.5H660.5ZM812.5 328.6V346.6M748.5 374.2L748.5 347.5L753.5 347.5L753.5 374.2M748.5 374.2V382.5M763.5 374.2L763.5 347.5L768.5 347.5L768.5 374.2M763.5 374.2V382.5M791.5 374.2L791.5 347.5L796.5 347.5L796.5 374.2M791.5 374.2V382.5M806.5 374.2L806.5 347.5L812.5 347.5L812.5 374.2M806.5 374.2V382.5M825.5 374.2L825.5 347.5L830.5 347.5L830.5 374.2M825.5 374.2V382.5M843.5 374.2L843.5 347.5L845.5 347.5L845.5 374.2M843.5 374.2V382.5M869.5 374.2L869.5 347.5L874.5 347.5L874.5 374.2M869.5 374.2V382.5M885.5 374.2L885.5 347.5L890.5 347.5L890.5 374.2M885.5 374.2V382.5M773.5 448.4V459M786.5 448.4V459M788.5 448.4V459M801.5 448.4V459M803.5 448.4V459M805.5 448.4V459M817.5 448.4V459M820.5 448.4V459M822.5 448.4V459M825.5 448.4V459M844.5 448.4V459M869.5 448.4V459M878.5 448.4V459M885.5 448.4V459M738.2 463.5L752.5 463.5L752.5 459.6M768.5 459L768.5 487.5L773.5 487.5L773.5 459M796.5 459L796.5 487.5L801.5 487.5L801.5 459M812.5 459L812.5 487.5L817.5 487.5L817.5 459M825.5 459L825.5 487.5L830.5 487.5L830.5 459M869.5 459L869.5 487.5L874.5 487.5L874.5 459M885.5 459L885.5 487.5L890.5 487.5L890.5 459M786.5 459L786.5 497.5L783.4 497.5M788.5 459L788.5 510M803.5 459V510M805.5 459V510M820.5 459V510M822.5 459V510M878.5 459V510M886.1 510.5L899.9 510.5M788.5 460L788.5 510.5L782.9 510.5M786.5 460L786.5 497.5L783.4 497.5M803.5 460L803.5 524.5L807.2 524.5M805.5 460L805.5 510.5L807.2 510.5M822.5 460L822.5 524.5L819.2 524.5M820.5 460L820.5 510.5L819.2 510.5M878.5 460L878.5 524.5L880.5 524.5M903.5 346.1V382.5M908.5 346.1V374.2M913.5 346.1V382.5M918.5 346.1V382.5M923.5 346.1V374.2M928.5 346.1V382.5M933.6 351.5H939.9M903.5 448.4V487.2M908.5 448.4V487.2M913.5 448.4V487.2M918.5 448.4V487.2M923.5 448.4V487.2M928.5 448.4V487.2M931.5 448.4V487.2M933 504.8L943.6 494.1"/>
<path fill="none" stroke="#00ff00" stroke-width="1.2" d="M176 797.5a3.5 3.5 0 1 0 7 0a3.5 3.5 0 1 0 -7 0ZM801.9 797.5a3.5 3.5 0 1 0 7 0a3.5 3.5 0 1 0 -7 0ZM196.5 320.5H206.5V349.5H196.5ZM196.6 334.5H206.2M198.1 362.5H206.2M364.5 414.5V446.7M427.9 448.5L432.5 448.5L432.5 498.5L434 498.5M567.5 436.5V496.2M588 437.5L580.5 437.5L580.5 472.2M677.5 352.9V382.5M609.5 437.7V480.3M706.5 448.4L706.5 497.5L698.3 497.5M720.5 448.4V489.7M723.5 448.4V483.5M721.1 463.5H745.9M805.5 382.5L805.5 329.5L820.5 329.5L820.5 382.5M879.5 329.3V382.5M954.9 379.5H1000M943 387.5H1002.5M943.4 458.5H978.7"/>
<path fill="none" stroke="#00ff00" stroke-width="0.9" d="M212.5 326.5H215.5V369.5H212.5Z"/>
<path fill="none" stroke="#00ff00" stroke-width="1.3" d="M193.7 390a3.1 3.1 0 1 0 6.2 0a3.1 3.1 0 1 0 -6.2 0ZM193.7 442.7a3.1 3.1 0 1 0 6.2 0a3.1 3.1 0 1 0 -6.2 0ZM285.7 390a3.1 3.1 0 1 0 6.2 0a3.1 3.1 0 1 0 -6.2 0ZM377.5 390a3.1 3.1 0 1 0 6.2 0a3.1 3.1 0 1 0 -6.2 0ZM285.7 442.9a3.1 3.1 0 1 0 6.2 0a3.1 3.1 0 1 0 -6.2 0ZM377.8 442.9a3.1 3.1 0 1 0 6.2 0a3.1 3.1 0 1 0 -6.2 0ZM470 390a3.1 3.1 0 1 0 6.2 0a3.1 3.1 0 1 0 -6.2 0ZM538.5 479.7L538.5 436.5L588 436.5M470 443a3.1 3.1 0 1 0 6.2 0a3.1 3.1 0 1 0 -6.2 0ZM703.7 395.8a3.1 3.1 0 1 0 6.2 0a3.1 3.1 0 1 0 -6.2 0ZM718.5 448.4V510M703.7 435.3a3.1 3.1 0 1 0 6.2 0a3.1 3.1 0 1 0 -6.2 0ZM718.5 460L718.5 510.5L721.1 510.5M795.9 396a3.1 3.1 0 1 0 6.2 0a3.1 3.1 0 1 0 -6.2 0ZM888 396a3.1 3.1 0 1 0 6.2 0a3.1 3.1 0 1 0 -6.2 0ZM795.9 434.8a3.1 3.1 0 1 0 6.2 0a3.1 3.1 0 1 0 -6.2 0ZM888 434.8a3.1 3.1 0 1 0 6.2 0a3.1 3.1 0 1 0 -6.2 0ZM970.8 416.4a3.1 3.1 0 1 0 6.2 0a3.1 3.1 0 1 0 -6.2 0ZM952.8 473.9a3.1 3.1 0 1 0 6.2 0a3.1 3.1 0 1 0 -6.2 0Z"/>
<path fill="none" stroke="#00ff00" stroke-width="3.5" d="M264.5 515.8H280"/>
<path fill="none" stroke="#00ff00" stroke-width="1.1" d="M526.5 337.2L526.5 394.5L588 394.5M623.5 337.9L623.5 391.5L666.5 391.5L666.5 386.7M588 394.5L668.5 394.5L668.5 386.7"/>
<path fill="none" stroke="#00ff00" stroke-width="2.4" d="M588 436.8H671.7M671 436.8V445.2"/>
<path fill="none" stroke="#00ff00" stroke-width="2" d="M999.5 316.1V317.8M999.5 337.2V340.6"/>
<path fill="#212830" d="M220.2 356.3H221.2V369.2H220.2ZM144.1 388.6H145.5V389.8H144.1ZM147.7 388.6H149.1V389.8H147.7ZM144.1 445.3H145.5V446.5H144.1ZM147.7 445.3H149.1V446.5H147.7ZM942.6 318.6H944.4V336H942.6ZM933.6 441.8H935.8V444H933.6Z"/>
<path fill="none" stroke="#212830" stroke-width="0.8" d="M176.5 713.5L182.5 713.5L182.5 709.2M176.9 728.5L182.5 728.5L182.5 723.1M176.5 737.5H182.5V742.5H176.5ZM802.4 713.5L808.5 713.5L808.5 709.2M802.5 725.5H805.5V728.5H802.5ZM802.5 737.5H808.5V742.5H802.5Z"/>
<path fill="none" stroke="#212830" stroke-width="0.6" d="M177.5 797.5H181.5M803.4 797.5H807.4M142 352.5H145.8M142 359.5H145.8M142 365.5H145.8M142 371.5H145.8M214.1 352.5H217.9M214.1 359.5H217.9M214.1 365.5H217.9M214.1 371.5H217.9M264.8 341.5H268.6M264.8 347.5H268.6M264.8 354.5H268.6M264.8 360.5H268.6M264.8 366.5H268.6M264.8 372.5H268.6M194.6 389.5H199M194.6 442.5H199M214.1 462.5H217.9M214.1 468.5H217.9M214.1 474.5H217.9M214.1 480.5H217.9M264.8 458.5H268.6M264.8 464.5H268.6M264.8 470.5H268.6M264.8 477.5H268.6M264.8 483.5H268.6M264.8 489.5H268.6M311.3 304.5L314.5 304.5L314.5 301.5M316.7 304.5L319.5 304.5L319.5 301.5M322.1 304.5L324.5 304.5L324.5 301.5M306.1 334.5H309.8M306.1 340.5H309.8M306.1 346.5H309.8M306.1 352.5H309.8M361.2 337.5H365.2M361.2 344.5H365.2M368.2 337.5H372.2M368.2 344.5H372.2M424.7 304.5L431.5 304.5L431.5 301.5M286.6 389.5H291M378.4 389.5H382.8M306.1 475.5H309.8M306.1 482.5H309.8M306.1 488.5H309.8M306.1 494.5H309.8M361.2 477.5H365.2M361.2 498.5H365.2M368.2 477.5H372.2M368.2 498.5H372.2M399.3 477.5H403.1M399.3 483.5H403.1M399.3 489.5H403.1M399.3 495.5H403.1M286.6 442.5H291M378.7 442.5H383.1M311.6 531.5L314.5 531.5L314.5 528.7M316.8 531.5L319.5 531.5L319.5 528.7M322.1 531.5L325.5 531.5L325.5 528.7M345.4 531.5L348.5 531.5L348.5 528.7M350.7 531.5L353.5 531.5L353.5 528.7M355.9 531.5L358.5 531.5L358.5 528.7M373.6 531.5L376.5 531.5L376.5 528.7M378.9 531.5L381.5 531.5L381.5 528.7M384.1 531.5L387.5 531.5L387.5 528.7M403.7 531.5L406.5 531.5L406.5 528.7M408.9 531.5L411.5 531.5L411.5 528.7M414.2 531.5L417.5 531.5L417.5 528.7M451.5 304.5L454.5 304.5L454.5 301.5M456.8 304.5L459.5 304.5L459.5 301.5M462.1 304.5L464.5 304.5L464.5 301.5M439.3 331.5H443.3M439.3 337.5H443.3M439.3 344.5H443.3M439.3 350.5H443.3M439.3 356.5H443.3M439.3 362.5H443.3M446.2 331.5H450.3M446.2 337.5H450.3M446.2 344.5H450.3M446.2 350.5H450.3M493.5 304.5L496.5 304.5L496.5 301.5M498.8 304.5L501.5 304.5L501.5 301.5M504.1 304.5L506.5 304.5L506.5 301.5M511.1 334.5H515.2M511.1 340.5H515.2M511.1 346.5H515.2M511.1 352.5H515.2M511.1 359.5H515.2M511.1 365.5H515.2M470.9 389.5H475.3M470.9 442.5H475.3M675.3 305.5H679.5M675.3 312.5H679.5M675.3 318.5H679.5M675.3 324.5H679.5M731.1 305.5H734.6M731.1 312.5H734.6M731.1 318.5H734.6M731.1 324.5H734.6M737.1 305.5H741.5M737.1 312.5H741.5M737.1 318.5H741.5M737.1 324.5H741.5M737.1 334.5H741.5M737.1 339.5H741.5M704.6 395.5H709M704.6 435.5H709M721.8 495.5H725.8M721.8 501.5H725.8M721.8 507.5H725.8M721.8 513.5H725.8M808.2 305.5H812.2M808.2 312.5H812.2M808.2 318.5H812.2M808.2 324.5H812.2M814.4 305.5H818.4M814.4 312.5H818.4M814.4 318.5H818.4M814.4 324.5H818.4M880.7 305.5H884.9M880.7 312.5H884.9M880.7 318.5H884.9M880.7 324.5H884.9M796.8 395.5H801.2M888.9 395.5H893.3M778.1 494.5H782.1M778.1 500.5H782.1M778.1 507.5H782.1M796.8 434.5H801.2M888.9 434.5H893.3M778.1 495.5H782.1M778.1 501.5H782.1M778.1 507.5H782.1M778.1 513.5H782.1M808.2 508.5H812.2M808.2 515.5H812.2M808.2 521.5H812.2M808.2 527.5H812.2M814.4 508.5H818.4M814.4 515.5H818.4M814.4 521.5H818.4M814.4 527.5H818.4M881.3 508.5H885.4M881.3 515.5H885.4M881.3 521.5H885.4M881.3 527.5H885.4M909.5 342.4V345.1M914.5 342.4V345.1M919.5 342.4V345.1M924.5 342.4V345.1M929.5 342.4V345.1M934.5 342.4V345.1M971.7 416.5H976.1M953.7 473.5H958.1"/>
<path fill="none" stroke="#212830" stroke-width="0.7" d="M803.5 768.5H806.5V771.5H803.5ZM152.5 311.5V314.6M157.5 311.5V314.6M163.5 311.5V314.6M225.5 320.7V323.8M231.5 320.7V323.8M236.5 320.7V323.8M223.5 507.4V510.6M228.5 507.4V510.6M233.5 507.4V510.6M280.6 319.7L283.8 317.2M283.8 319.7L286.3 317.2M624.3 515.5H627.8M813.5 503.2V532.1M954.5 311.3V315.1M954.5 341.4V344.8M970.5 311.3V315.1M970.5 341.4V344.8M975.5 311.3V315.1M975.5 341.4V344.8M980.5 311.3V315.1M980.5 341.4V344.8M985.5 311.3V315.1M985.5 341.4V344.8M990.5 311.3V315.1M990.5 341.4V344.8M995.5 311.3V315.1M995.5 341.4V344.8M1000.5 311.3V315.1M1000.5 341.4V344.8M1004.5 311.3V315.1M1004.5 341.4V344.8M914.5 488.7V491.6M919.5 488.7V491.6"/>
<path fill="#00ffff" d="M716.6 347.3a0.8 0.8 0 1 0 1.5 0a0.8 0.8 0 1 0 -1.5 0ZM739.1 347.3a0.8 0.8 0 1 0 1.5 0a0.8 0.8 0 1 0 -1.5 0ZM747.3 347.3a0.8 0.8 0 1 0 1.5 0a0.8 0.8 0 1 0 -1.5 0ZM762.6 347.3a0.8 0.8 0 1 0 1.5 0a0.8 0.8 0 1 0 -1.5 0ZM790.7 347.3a0.8 0.8 0 1 0 1.5 0a0.8 0.8 0 1 0 -1.5 0ZM806.2 347.3a0.8 0.8 0 1 0 1.5 0a0.8 0.8 0 1 0 -1.5 0ZM824.6 347.3a0.8 0.8 0 1 0 1.5 0a0.8 0.8 0 1 0 -1.5 0ZM842.5 347.3a0.8 0.8 0 1 0 1.5 0a0.8 0.8 0 1 0 -1.5 0ZM868.8 347.3a0.8 0.8 0 1 0 1.5 0a0.8 0.8 0 1 0 -1.5 0ZM884.7 347.3a0.8 0.8 0 1 0 1.5 0a0.8 0.8 0 1 0 -1.5 0ZM737.5 347.3a0.8 0.8 0 1 0 1.5 0a0.8 0.8 0 1 0 -1.5 0ZM772.6 487.2a0.8 0.8 0 1 0 1.5 0a0.8 0.8 0 1 0 -1.5 0ZM800.8 487.2a0.8 0.8 0 1 0 1.5 0a0.8 0.8 0 1 0 -1.5 0ZM816.4 487.2a0.8 0.8 0 1 0 1.5 0a0.8 0.8 0 1 0 -1.5 0ZM830 487.2a0.8 0.8 0 1 0 1.5 0a0.8 0.8 0 1 0 -1.5 0ZM873.8 487.2a0.8 0.8 0 1 0 1.5 0a0.8 0.8 0 1 0 -1.5 0ZM889.7 487.2a0.8 0.8 0 1 0 1.5 0a0.8 0.8 0 1 0 -1.5 0ZM843 487.2a0.8 0.8 0 1 0 1.5 0a0.8 0.8 0 1 0 -1.5 0ZM902.1 347.3a0.8 0.8 0 1 0 1.5 0a0.8 0.8 0 1 0 -1.5 0ZM917.2 347.3a0.8 0.8 0 1 0 1.5 0a0.8 0.8 0 1 0 -1.5 0ZM902.1 487.2a0.8 0.8 0 1 0 1.5 0a0.8 0.8 0 1 0 -1.5 0ZM917.2 487.2a0.8 0.8 0 1 0 1.5 0a0.8 0.8 0 1 0 -1.5 0Z"/>
<path fill="none" stroke="#00ffff" stroke-width="1.2" d="M717.3 347.3L723.1 341M739.9 347.3L742 345.1M748 347.3L753.8 341.5M763.3 347.3L769.1 341.5M791.5 347.3L797.3 341.5M806.9 347.3L812.7 341.5M825.3 347.3L831.1 341.5M843.3 347.3L849 341.5M869.6 347.3L875.3 341.5M885.5 347.3L891.2 341.5M738.2 347.3L744 341.5M773.3 487.2L779.1 481.4M801.5 487.2L807.3 481.4M817.2 487.2L823 481.4M830.7 487.2L836.5 481.4M874.6 487.2L880.3 481.4M890.5 487.2L896.3 481.4M843.8 487.2L849.5 481.4M902.9 347.3L908.7 341.5M917.9 347.3L923.7 341.5M902.9 487.2L908.7 481.4M917.9 487.2L923.7 481.4"/>
<path fill="#ff00ff" d="M167.5 457.6L169.5 455.7L171.3 457.5L169.4 459.5ZM203.8 461.6L206 459.8L207.6 461.7L205.5 463.5ZM523.1 331.2L525.1 333.1L523.3 334.9L521.3 333ZM507.5 387.2L510.1 386.3L511 388.7L508.4 389.6ZM508.7 442.9L511.1 444.3L509.9 446.5L507.4 445.1ZM447.7 496.1L449.5 498.3L447.6 499.9L445.8 497.8ZM624.2 334.4L626.5 332.8L628 334.9L625.7 336.5ZM678.5 349L681 350.2L679.9 352.5L677.4 351.3ZM658.5 384.2L660.8 385.8L659.3 387.9L657.1 386.3ZM658.3 446.6L660.7 445.2L662 447.4L659.6 448.8ZM655.7 447.1L664.4 442.7L665.7 445.9L659.4 450.2ZM724.7 481.9L727.3 480.7L728.4 483L725.8 484.2ZM695.9 495.5L698.2 493.9L699.7 495.9L697.4 497.6ZM931.9 351.9L929.3 352.9L928.4 350.5L931 349.5ZM931.5 387L928.9 388L928 385.6L930.6 384.6ZM927.4 443.3L930 444.3L929.1 446.7L926.5 445.8ZM929.6 480.3L932.3 481.3L931.4 483.7L928.8 482.7ZM979.2 453.5L980.8 455.8L978.7 457.3L977.1 455Z"/>
<path fill="none" stroke="#ff00ff" stroke-width="1.1" d="M166.4 458.2L170.3 454.2L172.8 456.7L168.8 460.6ZM202.6 462L206.9 458.4L209.2 461.1L204.9 464.7ZM522.6 330L526.5 333.9L524.1 336.4L520.1 332.5ZM506.2 387.2L511.5 385.3L512.7 388.6L507.4 390.5ZM507.9 441.9L512.8 444.7L511 447.7L506.2 444.9ZM447.3 494.9L450.9 499.2L448.2 501.5L444.6 497.2ZM623 334.7L627.6 331.5L629.6 334.4L625 337.6ZM677.6 348.1L682.6 350.4L681.2 353.6L676.1 351.3ZM657.8 383.1L662.4 386.3L660.4 389.2L655.8 386ZM657 446.8L661.9 444L663.6 447.1L658.8 449.9ZM723.5 482L728.5 479.6L730 482.8L724.9 485.1ZM694.6 495.8L699.2 492.5L701.3 495.4L696.7 498.6ZM933.2 352L927.9 353.9L926.7 350.6L932 348.6ZM932.8 387L927.6 389L926.4 385.6L931.6 383.7ZM926.4 442.5L931.7 444.4L930.5 447.7L925.2 445.8ZM928.7 479.5L933.9 481.4L932.7 484.7L927.5 482.8ZM978.9 452.3L982.2 456.8L979.3 458.9L976.1 454.3Z"/>
<path fill="none" stroke="#ff00ff" stroke-width="0.9" d="M170.3 454.2L170.9 452L175 456.1L172.8 456.7M206.9 458.4L207.7 456.2L211.4 460.7L209.2 461.1M526.5 333.9L528.7 334.5L524.7 338.6L524.1 336.4M511.5 385.3L513 383.5L514.9 388.9L512.7 388.6M512.8 444.5L515.1 444.5L512.2 449.7L511 447.7M450.9 499.2L453.1 500L448.7 503.7L448.2 501.5M627.6 331.5L628.5 329.5L631.9 334.2L629.6 334.4M682.6 350.4L684.9 350.3L682.5 355.5L681.2 353.6M662.4 386.3L664.7 386.5L661.4 391.2L660.4 389.2M661.9 444L663.1 442L665.9 447.5L663.6 447.5M728.5 479.6L729.9 477.7L732.3 483L730 482.8M699.2 492.5L700.2 490.5L703.5 495.2L701.3 495.4M927.9 353.9L926.4 355.6L924.5 350.2L926.7 350.6M927.6 389L926.1 390.7L924.1 385.3L926.4 385.6M931.7 444.4L934 444L932 449.4L930.5 447.7M933.9 481.4L936.2 481L934.2 486.4L932.7 484.7M982.2 456.8L984.2 457.8L979.5 461.1L979.3 458.9"/>
<path fill="#ff0000" d="M1116 755H1140V760H1116ZM1116 779H1150V784H1116ZM1106 797H1129V802H1106ZM1162 798H1164V803H1162Z"/>
<path fill="none" stroke="#ffffff" stroke-width="0.7" d="M530 643.5H628.6"/>
<path fill="none" stroke="#ffffff" stroke-width="1" d="M171.5 659.5H431.5V805.5H171.5ZM171.3 674.5H431.6M171.3 688.5H431.6M171.3 703.5H431.6M171.3 718.5H431.6M171.3 732.5H431.6M171.3 747.5H431.6M171.3 761.5H431.6M171.3 776.5H431.6M171.3 790.5H431.6M188.5 659.5V805.2M235.5 659.5V805.2M255.5 659.5V805.2M378.5 659.5V805.2M797.5 659.5H1057.5V805.5H797.5ZM797 674.5H1057.6M797 688.5H1057.6M797 703.5H1057.6M797 718.5H1057.6M797 732.5H1057.6M797 747.5H1057.6M797 761.5H1057.6M797 776.5H1057.6M797 790.5H1057.6M814.5 659.5V805.2M860.5 659.5V805.2M881.5 659.5V805.2M1004.5 659.5V805.2"/>
<filter id="nf" x="0" y="0" width="1" height="1" filterUnits="objectBoundingBox"><feOffset dx="0" dy="0"/></filter><g filter="url(#nf)">
<text class="t" x="140.6" y="253.4" font-size="9" style="fill:#00ff00" text-anchor="middle" textLength="4.6" lengthAdjust="spacingAndGlyphs" stroke="#0f0" stroke-width=".15">1</text>
<text class="t" x="212.1" y="253.4" font-size="9" style="fill:#00ff00" text-anchor="middle" textLength="4.6" lengthAdjust="spacingAndGlyphs" stroke="#0f0" stroke-width=".15">3</text>
<text class="t" x="289.5" y="253.4" font-size="9" style="fill:#00ff00" text-anchor="middle" textLength="4.6" lengthAdjust="spacingAndGlyphs" stroke="#0f0" stroke-width=".15">4</text>
<text class="t" x="366.9" y="253.4" font-size="9" style="fill:#00ff00" text-anchor="middle" textLength="4.6" lengthAdjust="spacingAndGlyphs" stroke="#0f0" stroke-width=".15">5</text>
<text class="t" x="444" y="253.4" font-size="9" style="fill:#00ff00" text-anchor="middle" textLength="4.6" lengthAdjust="spacingAndGlyphs" stroke="#0f0" stroke-width=".15">6</text>
<text class="t" x="510.5" y="253.4" font-size="9" style="fill:#00ff00" text-anchor="middle" textLength="4.6" lengthAdjust="spacingAndGlyphs" stroke="#0f0" stroke-width=".15">7</text>
<text class="t" x="524.9" y="253.4" font-size="9" style="fill:#00ff00" text-anchor="middle" textLength="4.6" lengthAdjust="spacingAndGlyphs" stroke="#0f0" stroke-width=".15">8</text>
<text class="t" x="574.3" y="253.4" font-size="9" style="fill:#00ff00" text-anchor="middle" textLength="4.6" lengthAdjust="spacingAndGlyphs" stroke="#0f0" stroke-width=".15">9</text>
<text class="t" x="624.2" y="253.4" font-size="9" style="fill:#00ff00" text-anchor="middle" textLength="8" lengthAdjust="spacingAndGlyphs" stroke="#0f0" stroke-width=".15">10</text>
<text class="t" x="638.6" y="253.4" font-size="9" style="fill:#00ff00" text-anchor="middle" textLength="8" lengthAdjust="spacingAndGlyphs" stroke="#0f0" stroke-width=".15">11</text>
<text class="t" x="705.1" y="253.4" font-size="9" style="fill:#00ff00" text-anchor="middle" textLength="8" lengthAdjust="spacingAndGlyphs" stroke="#0f0" stroke-width=".15">12</text>
<text class="t" x="782.3" y="253.4" font-size="9" style="fill:#00ff00" text-anchor="middle" textLength="8" lengthAdjust="spacingAndGlyphs" stroke="#0f0" stroke-width=".15">13</text>
<text class="t" x="859.4" y="253.4" font-size="9" style="fill:#00ff00" text-anchor="middle" textLength="8" lengthAdjust="spacingAndGlyphs" stroke="#0f0" stroke-width=".15">14</text>
<text class="t" x="937.1" y="253.4" font-size="9" style="fill:#00ff00" text-anchor="middle" textLength="8" lengthAdjust="spacingAndGlyphs" stroke="#0f0" stroke-width=".15">15</text>
<text class="t" x="1008.5" y="253.4" font-size="9" style="fill:#00ff00" text-anchor="middle" textLength="8" lengthAdjust="spacingAndGlyphs" stroke="#0f0" stroke-width=".15">17</text>
<text class="t" x="140.3" y="597.6" font-size="9" style="fill:#00ff00" text-anchor="middle" textLength="4.6" lengthAdjust="spacingAndGlyphs" stroke="#0f0" stroke-width=".15">1</text>
<text class="t" x="173.1" y="597.6" font-size="9" style="fill:#00ff00" text-anchor="middle" textLength="4.6" lengthAdjust="spacingAndGlyphs" stroke="#0f0" stroke-width=".15">2</text>
<text class="t" x="212.1" y="597.6" font-size="9" style="fill:#00ff00" text-anchor="middle" textLength="4.6" lengthAdjust="spacingAndGlyphs" stroke="#0f0" stroke-width=".15">3</text>
<text class="t" x="289.4" y="597.6" font-size="9" style="fill:#00ff00" text-anchor="middle" textLength="4.6" lengthAdjust="spacingAndGlyphs" stroke="#0f0" stroke-width=".15">4</text>
<text class="t" x="367.1" y="597.6" font-size="9" style="fill:#00ff00" text-anchor="middle" textLength="4.6" lengthAdjust="spacingAndGlyphs" stroke="#0f0" stroke-width=".15">5</text>
<text class="t" x="444.2" y="597.6" font-size="9" style="fill:#00ff00" text-anchor="middle" textLength="4.6" lengthAdjust="spacingAndGlyphs" stroke="#0f0" stroke-width=".15">6</text>
<text class="t" x="510.7" y="597.6" font-size="9" style="fill:#00ff00" text-anchor="middle" textLength="4.6" lengthAdjust="spacingAndGlyphs" stroke="#0f0" stroke-width=".15">7</text>
<text class="t" x="525.1" y="597.6" font-size="9" style="fill:#00ff00" text-anchor="middle" textLength="4.6" lengthAdjust="spacingAndGlyphs" stroke="#0f0" stroke-width=".15">8</text>
<text class="t" x="574.6" y="597.6" font-size="9" style="fill:#00ff00" text-anchor="middle" textLength="4.6" lengthAdjust="spacingAndGlyphs" stroke="#0f0" stroke-width=".15">9</text>
<text class="t" x="624.1" y="597.6" font-size="9" style="fill:#00ff00" text-anchor="middle" textLength="8" lengthAdjust="spacingAndGlyphs" stroke="#0f0" stroke-width=".15">10</text>
<text class="t" x="638.5" y="597.6" font-size="9" style="fill:#00ff00" text-anchor="middle" textLength="8" lengthAdjust="spacingAndGlyphs" stroke="#0f0" stroke-width=".15">11</text>
<text class="t" x="705.1" y="597.6" font-size="9" style="fill:#00ff00" text-anchor="middle" textLength="8" lengthAdjust="spacingAndGlyphs" stroke="#0f0" stroke-width=".15">12</text>
<text class="t" x="782.3" y="597.6" font-size="9" style="fill:#00ff00" text-anchor="middle" textLength="8" lengthAdjust="spacingAndGlyphs" stroke="#0f0" stroke-width=".15">13</text>
<text class="t" x="859.4" y="597.6" font-size="9" style="fill:#00ff00" text-anchor="middle" textLength="8" lengthAdjust="spacingAndGlyphs" stroke="#0f0" stroke-width=".15">14</text>
<text class="t" x="937.1" y="597.6" font-size="9" style="fill:#00ff00" text-anchor="middle" textLength="8" lengthAdjust="spacingAndGlyphs" stroke="#0f0" stroke-width=".15">15</text>
<text class="t" x="975.9" y="597.6" font-size="9" style="fill:#00ff00" text-anchor="middle" textLength="8" lengthAdjust="spacingAndGlyphs" stroke="#0f0" stroke-width=".15">16</text>
<text class="t" x="1008.7" y="597.6" font-size="9" style="fill:#00ff00" text-anchor="middle" textLength="8" lengthAdjust="spacingAndGlyphs" stroke="#0f0" stroke-width=".15">17</text>
<text class="t" x="73.5" y="311.4" font-size="9" style="fill:#00ff00" text-anchor="middle" textLength="4.6" lengthAdjust="spacingAndGlyphs" stroke="#0f0" stroke-width=".15">F</text>
<text class="t" x="1064.8" y="311.4" font-size="9" style="fill:#00ff00" text-anchor="middle" textLength="4.6" lengthAdjust="spacingAndGlyphs" stroke="#0f0" stroke-width=".15">F</text>
<text class="t" x="73.5" y="383.3" font-size="9" style="fill:#00ff00" text-anchor="middle" textLength="4.6" lengthAdjust="spacingAndGlyphs" stroke="#0f0" stroke-width=".15">D</text>
<text class="t" x="1064.8" y="383.3" font-size="9" style="fill:#00ff00" text-anchor="middle" textLength="4.6" lengthAdjust="spacingAndGlyphs" stroke="#0f0" stroke-width=".15">D</text>
<text class="t" x="73.5" y="455.4" font-size="9" style="fill:#00ff00" text-anchor="middle" textLength="4.6" lengthAdjust="spacingAndGlyphs" stroke="#0f0" stroke-width=".15">C</text>
<text class="t" x="1064.8" y="455.4" font-size="9" style="fill:#00ff00" text-anchor="middle" textLength="4.6" lengthAdjust="spacingAndGlyphs" stroke="#0f0" stroke-width=".15">C</text>
<text class="t" x="73.5" y="526.8" font-size="9" style="fill:#00ff00" text-anchor="middle" textLength="4.6" lengthAdjust="spacingAndGlyphs" stroke="#0f0" stroke-width=".15">A</text>
<text class="t" x="1064.8" y="526.8" font-size="9" style="fill:#00ff00" text-anchor="middle" textLength="4.6" lengthAdjust="spacingAndGlyphs" stroke="#0f0" stroke-width=".15">A</text>
<text class="t" x="134.2" y="268.6" font-size="6.8" text-anchor="middle" textLength="8.2" lengthAdjust="spacingAndGlyphs" stroke="#fff" stroke-width=".4">120</text>
<text class="t" x="176.5" y="269.8" font-size="6.8" text-anchor="middle" textLength="11" lengthAdjust="spacingAndGlyphs" stroke="#fff" stroke-width=".4">7500</text>
<text class="t" x="237.3" y="269.8" font-size="6.8" text-anchor="middle" textLength="11" lengthAdjust="spacingAndGlyphs" stroke="#fff" stroke-width=".4">5500</text>
<text class="t" x="275.8" y="269.8" font-size="6.8" text-anchor="middle" textLength="11" lengthAdjust="spacingAndGlyphs" stroke="#fff" stroke-width=".4">2900</text>
<text class="t" x="328.3" y="269.8" font-size="6.8" text-anchor="middle" textLength="11" lengthAdjust="spacingAndGlyphs" stroke="#fff" stroke-width=".4">8400</text>
<text class="t" x="405.2" y="269.8" font-size="6.8" text-anchor="middle" textLength="11" lengthAdjust="spacingAndGlyphs" stroke="#fff" stroke-width=".4">8400</text>
<text class="t" x="480.3" y="269.8" font-size="6.8" text-anchor="middle" textLength="11" lengthAdjust="spacingAndGlyphs" stroke="#fff" stroke-width=".4">7500</text>
<text class="t" x="517.3" y="269.3" font-size="6.8" text-anchor="middle" textLength="8.2" lengthAdjust="spacingAndGlyphs" stroke="#fff" stroke-width=".4">300</text>
<text class="t" x="547.2" y="269.8" font-size="6.8" text-anchor="middle" textLength="11" lengthAdjust="spacingAndGlyphs" stroke="#fff" stroke-width=".4">6000</text>
<text class="t" x="602.5" y="269.8" font-size="6.8" text-anchor="middle" textLength="11" lengthAdjust="spacingAndGlyphs" stroke="#fff" stroke-width=".4">6000</text>
<text class="t" x="631.6" y="268.8" font-size="6.8" text-anchor="middle" textLength="8.2" lengthAdjust="spacingAndGlyphs" stroke="#fff" stroke-width=".4">500</text>
<text class="t" x="669.3" y="269.8" font-size="6.8" text-anchor="middle" textLength="11" lengthAdjust="spacingAndGlyphs" stroke="#fff" stroke-width=".4">7500</text>
<text class="t" x="743.5" y="269.8" font-size="6.8" text-anchor="middle" textLength="11" lengthAdjust="spacingAndGlyphs" stroke="#fff" stroke-width=".4">8400</text>
<text class="t" x="821.3" y="269.8" font-size="6.8" text-anchor="middle" textLength="11" lengthAdjust="spacingAndGlyphs" stroke="#fff" stroke-width=".4">8400</text>
<text class="t" x="873.2" y="269.8" font-size="6.8" text-anchor="middle" textLength="11" lengthAdjust="spacingAndGlyphs" stroke="#fff" stroke-width=".4">2900</text>
<text class="t" x="911.6" y="269.8" font-size="6.8" text-anchor="middle" textLength="11" lengthAdjust="spacingAndGlyphs" stroke="#fff" stroke-width=".4">5500</text>
<text class="t" x="973" y="269.8" font-size="6.8" text-anchor="middle" textLength="11" lengthAdjust="spacingAndGlyphs" stroke="#fff" stroke-width=".4">7500</text>
<text class="t" x="1015.2" y="268.8" font-size="6.8" text-anchor="middle" textLength="8.2" lengthAdjust="spacingAndGlyphs" stroke="#fff" stroke-width=".4">120</text>
<text class="t" x="574.5" y="258.6" font-size="6.8" text-anchor="middle" textLength="13.5" lengthAdjust="spacingAndGlyphs" stroke="#fff" stroke-width=".4">64950</text>
<text class="t" x="134.5" y="570.2" font-size="6.8" text-anchor="middle" textLength="8.2" lengthAdjust="spacingAndGlyphs" stroke="#fff" stroke-width=".4">120</text>
<text class="t" x="157.3" y="571.2" font-size="6.8" text-anchor="middle" textLength="11" lengthAdjust="spacingAndGlyphs" stroke="#fff" stroke-width=".4">3600</text>
<text class="t" x="192.5" y="571.2" font-size="6.8" text-anchor="middle" textLength="11" lengthAdjust="spacingAndGlyphs" stroke="#fff" stroke-width=".4">4200</text>
<text class="t" x="237.3" y="571.2" font-size="6.8" text-anchor="middle" textLength="11" lengthAdjust="spacingAndGlyphs" stroke="#fff" stroke-width=".4">5500</text>
<text class="t" x="276.3" y="571.2" font-size="6.8" text-anchor="middle" textLength="11" lengthAdjust="spacingAndGlyphs" stroke="#fff" stroke-width=".4">2900</text>
<text class="t" x="328.3" y="571.2" font-size="6.8" text-anchor="middle" textLength="11" lengthAdjust="spacingAndGlyphs" stroke="#fff" stroke-width=".4">8400</text>
<text class="t" x="405.5" y="571.2" font-size="6.8" text-anchor="middle" textLength="11" lengthAdjust="spacingAndGlyphs" stroke="#fff" stroke-width=".4">8400</text>
<text class="t" x="480.3" y="571.2" font-size="6.8" text-anchor="middle" textLength="11" lengthAdjust="spacingAndGlyphs" stroke="#fff" stroke-width=".4">7500</text>
<text class="t" x="547.2" y="571.2" font-size="6.8" text-anchor="middle" textLength="11" lengthAdjust="spacingAndGlyphs" stroke="#fff" stroke-width=".4">6000</text>
<text class="t" x="602.5" y="571.2" font-size="6.8" text-anchor="middle" textLength="11" lengthAdjust="spacingAndGlyphs" stroke="#fff" stroke-width=".4">6000</text>
<text class="t" x="669.3" y="571.2" font-size="6.8" text-anchor="middle" textLength="11" lengthAdjust="spacingAndGlyphs" stroke="#fff" stroke-width=".4">7500</text>
<text class="t" x="743.5" y="571.2" font-size="6.8" text-anchor="middle" textLength="11" lengthAdjust="spacingAndGlyphs" stroke="#fff" stroke-width=".4">8400</text>
<text class="t" x="821.3" y="571.2" font-size="6.8" text-anchor="middle" textLength="11" lengthAdjust="spacingAndGlyphs" stroke="#fff" stroke-width=".4">8400</text>
<text class="t" x="873.2" y="571.2" font-size="6.8" text-anchor="middle" textLength="11" lengthAdjust="spacingAndGlyphs" stroke="#fff" stroke-width=".4">2900</text>
<text class="t" x="911.6" y="571.2" font-size="6.8" text-anchor="middle" textLength="11" lengthAdjust="spacingAndGlyphs" stroke="#fff" stroke-width=".4">5500</text>
<text class="t" x="956.5" y="571.2" font-size="6.8" text-anchor="middle" textLength="11" lengthAdjust="spacingAndGlyphs" stroke="#fff" stroke-width=".4">4300</text>
<text class="t" x="992.5" y="571.2" font-size="6.8" text-anchor="middle" textLength="11" lengthAdjust="spacingAndGlyphs" stroke="#fff" stroke-width=".4">3600</text>
<text class="t" x="1015.3" y="570.2" font-size="6.8" text-anchor="middle" textLength="8.2" lengthAdjust="spacingAndGlyphs" stroke="#fff" stroke-width=".4">120</text>
<text class="t" x="517.6" y="579.2" font-size="6.8" text-anchor="middle" textLength="8.2" lengthAdjust="spacingAndGlyphs" stroke="#fff" stroke-width=".4">300</text>
<text class="t" x="575.5" y="579.2" font-size="6.8" text-anchor="middle" textLength="13.5" lengthAdjust="spacingAndGlyphs" stroke="#fff" stroke-width=".4">64950</text>
<text class="t" x="631.6" y="579.2" font-size="6.8" text-anchor="middle" textLength="8.2" lengthAdjust="spacingAndGlyphs" stroke="#fff" stroke-width=".4">500</text>
<text class="t" x="95" y="293.2" font-size="6.8" text-anchor="middle" textLength="11" lengthAdjust="spacingAndGlyphs" transform="rotate(-90 95 293.2)" stroke="#fff" stroke-width=".4">1000</text>
<text class="t" x="95" y="344.6" font-size="6.8" text-anchor="middle" textLength="11" lengthAdjust="spacingAndGlyphs" transform="rotate(-90 95 344.6)" stroke="#fff" stroke-width=".4">7500</text>
<text class="t" x="95" y="416.5" font-size="6.8" text-anchor="middle" textLength="11" lengthAdjust="spacingAndGlyphs" transform="rotate(-90 95 416.5)" stroke="#fff" stroke-width=".4">7400</text>
<text class="t" x="95" y="488.3" font-size="6.8" text-anchor="middle" textLength="11" lengthAdjust="spacingAndGlyphs" transform="rotate(-90 95 488.3)" stroke="#fff" stroke-width=".4">7500</text>
<text class="t" x="95" y="539.6" font-size="6.8" text-anchor="middle" textLength="11" lengthAdjust="spacingAndGlyphs" transform="rotate(-90 95 539.6)" stroke="#fff" stroke-width=".4">1000</text>
<text class="t" x="84.8" y="416" font-size="6.8" text-anchor="middle" textLength="14" lengthAdjust="spacingAndGlyphs" transform="rotate(-90 84.8 416)" stroke="#fff" stroke-width=".4">22400</text>
<text class="t" x="1033.8" y="293.2" font-size="6.8" text-anchor="middle" textLength="11" lengthAdjust="spacingAndGlyphs" transform="rotate(-90 1033.8 293.2)" stroke="#fff" stroke-width=".4">1000</text>
<text class="t" x="1041.3" y="344.6" font-size="6.8" text-anchor="middle" textLength="11" lengthAdjust="spacingAndGlyphs" transform="rotate(-90 1041.3 344.6)" stroke="#fff" stroke-width=".4">7500</text>
<text class="t" x="1041.3" y="416.5" font-size="6.8" text-anchor="middle" textLength="11" lengthAdjust="spacingAndGlyphs" transform="rotate(-90 1041.3 416.5)" stroke="#fff" stroke-width=".4">7400</text>
<text class="t" x="1041.3" y="488.3" font-size="6.8" text-anchor="middle" textLength="11" lengthAdjust="spacingAndGlyphs" transform="rotate(-90 1041.3 488.3)" stroke="#fff" stroke-width=".4">7500</text>
<text class="t" x="1033.8" y="539.6" font-size="6.8" text-anchor="middle" textLength="11" lengthAdjust="spacingAndGlyphs" transform="rotate(-90 1033.8 539.6)" stroke="#fff" stroke-width=".4">1000</text>
<text class="t" x="1051.6" y="416" font-size="6.8" text-anchor="middle" textLength="14" lengthAdjust="spacingAndGlyphs" transform="rotate(-90 1051.6 416)" stroke="#fff" stroke-width=".4">22400</text>
<text class="t" x="506" y="227.4" font-size="5.8" textLength="8.5" lengthAdjust="spacingAndGlyphs" font-weight="bold">A区</text>
<text class="t" x="523.6" y="227.4" font-size="5.8" textLength="8.5" lengthAdjust="spacingAndGlyphs" font-weight="bold">B区</text>
<text class="t" x="504" y="607.2" font-size="5.8" textLength="8.5" lengthAdjust="spacingAndGlyphs" font-weight="bold">A区</text>
<text class="t" x="521.2" y="607.2" font-size="5.8" textLength="8.5" lengthAdjust="spacingAndGlyphs" font-weight="bold">B区</text>
<text class="tr" x="530" y="642.2" font-size="13.2" textLength="98.5" lengthAdjust="spacingAndGlyphs" font-weight="bold">二层弱电平面图</text>
<text class="t" x="179.8" y="670" font-size="5.6" text-anchor="middle" textLength="8.5" lengthAdjust="spacingAndGlyphs" font-weight="bold">图例</text>
<text class="t" x="205.2" y="670" font-size="5.6" text-anchor="middle" textLength="8.5" lengthAdjust="spacingAndGlyphs" font-weight="bold">名称</text>
<text class="t" x="240.9" y="670" font-size="5.6" text-anchor="middle" textLength="8.5" lengthAdjust="spacingAndGlyphs" font-weight="bold">数量</text>
<text class="t" x="309.6" y="670" font-size="5.6" text-anchor="middle" textLength="32" lengthAdjust="spacingAndGlyphs" font-weight="bold">线缆及敷设方式</text>
<text class="t" x="404.3" y="670" font-size="5.6" text-anchor="middle" textLength="16" lengthAdjust="spacingAndGlyphs" font-weight="bold">安装方式</text>
<text class="t" x="190.6" y="684.8" font-size="5.6" textLength="20" lengthAdjust="spacingAndGlyphs" font-weight="bold">枪式摄像机</text>
<text class="t" x="240.8" y="685" font-size="6.2" textLength="3.1" lengthAdjust="spacingAndGlyphs" stroke="#fff" stroke-width=".35">2</text>
<text class="t" x="259.7" y="685" font-size="6.3" textLength="108" lengthAdjust="spacingAndGlyphs" stroke="#fff" stroke-width=".35">CAT6-4PrUTP+RVV2x1.0-PC25, CC, WC</text>
<text class="t" x="383" y="684.8" font-size="5.6" textLength="40.5" lengthAdjust="spacingAndGlyphs" font-weight="bold">下沿距地2.5米, 壁装</text>
<text class="t" x="190.6" y="699.3" font-size="5.6" textLength="20" lengthAdjust="spacingAndGlyphs" font-weight="bold">半球摄像机</text>
<text class="t" x="240.8" y="699.5" font-size="6.2" textLength="3.1" lengthAdjust="spacingAndGlyphs" stroke="#fff" stroke-width=".35">5</text>
<text class="t" x="259.7" y="699.5" font-size="6.3" textLength="108" lengthAdjust="spacingAndGlyphs" stroke="#fff" stroke-width=".35">CAT6-4PrUTP+RVV2x1.0-PC25, CC, WC</text>
<text class="t" x="383" y="699.3" font-size="5.6" textLength="16.5" lengthAdjust="spacingAndGlyphs" font-weight="bold">吸顶安装</text>
<text class="t" x="190.6" y="713.9" font-size="5.6" textLength="23.5" lengthAdjust="spacingAndGlyphs" font-weight="bold">网络信息点</text>
<text class="t" x="240.8" y="714.1" font-size="6.2" textLength="5.8" lengthAdjust="spacingAndGlyphs" stroke="#fff" stroke-width=".35">48</text>
<text class="t" x="259.7" y="714.1" font-size="6.3" textLength="78" lengthAdjust="spacingAndGlyphs" stroke="#fff" stroke-width=".35">CAT6-4PrUTP-PC16, CC, WC</text>
<text class="t" x="383" y="713.9" font-size="5.6" textLength="40.5" lengthAdjust="spacingAndGlyphs" font-weight="bold">下沿距地0.3米, 壁装</text>
<text class="t" x="190.6" y="728.4" font-size="5.6" textLength="37" lengthAdjust="spacingAndGlyphs" font-weight="bold">网络信息点 (内网)</text>
<text class="t" x="240.8" y="728.6" font-size="6.2" textLength="5.8" lengthAdjust="spacingAndGlyphs" stroke="#fff" stroke-width=".35">48</text>
<text class="t" x="259.7" y="728.6" font-size="6.3" textLength="78" lengthAdjust="spacingAndGlyphs" stroke="#fff" stroke-width=".35">CAT6-4PrUTP-PC16, CC, WC</text>
<text class="t" x="383" y="728.4" font-size="5.6" textLength="40.5" lengthAdjust="spacingAndGlyphs" font-weight="bold">下沿距地0.3米, 壁装</text>
<text class="t" x="190.6" y="742.9" font-size="5.6" textLength="23.5" lengthAdjust="spacingAndGlyphs" font-weight="bold">语音信息点</text>
<text class="t" x="240.8" y="743.1" font-size="6.2" textLength="5.8" lengthAdjust="spacingAndGlyphs" stroke="#fff" stroke-width=".35">48</text>
<text class="t" x="259.7" y="743.1" font-size="6.3" textLength="78" lengthAdjust="spacingAndGlyphs" stroke="#fff" stroke-width=".35">CAT6-4PrUTP-PC16, CC, WC</text>
<text class="t" x="383" y="742.9" font-size="5.6" textLength="40.5" lengthAdjust="spacingAndGlyphs" font-weight="bold">下沿距地0.3米, 壁装</text>
<text class="t" x="190.6" y="757.4" font-size="5.6" textLength="23.5" lengthAdjust="spacingAndGlyphs" font-weight="bold">网络信息点</text>
<text class="t" x="240.8" y="757.6" font-size="6.2" textLength="3.1" lengthAdjust="spacingAndGlyphs" stroke="#fff" stroke-width=".35">4</text>
<text class="t" x="259.7" y="757.6" font-size="6.3" textLength="89" lengthAdjust="spacingAndGlyphs" stroke="#fff" stroke-width=".35">CAT6-4PrUTP-PC16, CC, WC, FC</text>
<text class="t" x="383" y="757.4" font-size="5.6" textLength="16.5" lengthAdjust="spacingAndGlyphs" font-weight="bold">地面安装</text>
<text class="t" x="190.6" y="771.9" font-size="5.6" textLength="37" lengthAdjust="spacingAndGlyphs" font-weight="bold">网络信息点 (内网)</text>
<text class="t" x="240.8" y="772.1" font-size="6.2" textLength="3.1" lengthAdjust="spacingAndGlyphs" stroke="#fff" stroke-width=".35">4</text>
<text class="t" x="259.7" y="772.1" font-size="6.3" textLength="89" lengthAdjust="spacingAndGlyphs" stroke="#fff" stroke-width=".35">CAT6-4PrUTP-PC16, CC, WC, FC</text>
<text class="t" x="383" y="771.9" font-size="5.6" textLength="16.5" lengthAdjust="spacingAndGlyphs" font-weight="bold">地面安装</text>
<text class="t" x="190.6" y="786.4" font-size="5.6" textLength="23.5" lengthAdjust="spacingAndGlyphs" font-weight="bold">语音信息点</text>
<text class="t" x="240.8" y="786.6" font-size="6.2" textLength="3.1" lengthAdjust="spacingAndGlyphs" stroke="#fff" stroke-width=".35">2</text>
<text class="t" x="259.7" y="786.6" font-size="6.3" textLength="89" lengthAdjust="spacingAndGlyphs" stroke="#fff" stroke-width=".35">CAT6-4PrUTP-PC16, CC, WC, FC</text>
<text class="t" x="383" y="786.4" font-size="5.6" textLength="16.5" lengthAdjust="spacingAndGlyphs" font-weight="bold">地面安装</text>
<text class="t" x="190.6" y="800.9" font-size="5.6" textLength="14.5" lengthAdjust="spacingAndGlyphs" font-weight="bold">吸顶音箱</text>
<text class="t" x="240.8" y="801.1" font-size="6.2" textLength="3.1" lengthAdjust="spacingAndGlyphs" stroke="#fff" stroke-width=".35">8</text>
<text class="t" x="259.7" y="801.1" font-size="6.3" textLength="75" lengthAdjust="spacingAndGlyphs" stroke="#fff" stroke-width=".35">RVS2×1.5-SC16, CC, WC, FC</text>
<text class="t" x="383" y="800.9" font-size="5.6" textLength="16.5" lengthAdjust="spacingAndGlyphs" font-weight="bold">吸顶安装</text>
<text class="t" x="805.6" y="670" font-size="5.6" text-anchor="middle" textLength="7" lengthAdjust="spacingAndGlyphs" font-weight="bold">图例</text>
<text class="t" x="830.5" y="670" font-size="5.6" text-anchor="middle" textLength="8.5" lengthAdjust="spacingAndGlyphs" font-weight="bold">名称</text>
<text class="t" x="866.3" y="670" font-size="5.6" text-anchor="middle" textLength="8.5" lengthAdjust="spacingAndGlyphs" font-weight="bold">数量</text>
<text class="t" x="935.8" y="670" font-size="5.6" text-anchor="middle" textLength="32" lengthAdjust="spacingAndGlyphs" font-weight="bold">线缆及敷设方式</text>
<text class="t" x="1030.4" y="670" font-size="5.6" text-anchor="middle" textLength="16" lengthAdjust="spacingAndGlyphs" font-weight="bold">安装方式</text>
<text class="t" x="816.6" y="684.8" font-size="5.6" textLength="20" lengthAdjust="spacingAndGlyphs" font-weight="bold">枪式摄像机</text>
<text class="t" x="865.3" y="685" font-size="6.2" textLength="3.1" lengthAdjust="spacingAndGlyphs" stroke="#fff" stroke-width=".35">4</text>
<text class="t" x="885.9" y="685" font-size="6.3" textLength="108" lengthAdjust="spacingAndGlyphs" stroke="#fff" stroke-width=".35">CAT6-4PrUTP+RVV2x1.0-PC25, CC, WC</text>
<text class="t" x="1009.3" y="684.8" font-size="5.6" textLength="40.5" lengthAdjust="spacingAndGlyphs" font-weight="bold">下沿距地2.5米, 壁装</text>
<text class="t" x="816.6" y="699.3" font-size="5.6" textLength="20" lengthAdjust="spacingAndGlyphs" font-weight="bold">半球摄像机</text>
<text class="t" x="865.3" y="699.5" font-size="6.2" textLength="5.8" lengthAdjust="spacingAndGlyphs" stroke="#fff" stroke-width=".35">10</text>
<text class="t" x="885.9" y="699.5" font-size="6.3" textLength="108" lengthAdjust="spacingAndGlyphs" stroke="#fff" stroke-width=".35">CAT6-4PrUTP+RVV2x1.0-PC25, CC, WC</text>
<text class="t" x="1009.3" y="699.3" font-size="5.6" textLength="16.5" lengthAdjust="spacingAndGlyphs" font-weight="bold">吸顶安装</text>
<text class="t" x="816.6" y="713.9" font-size="5.6" textLength="23.5" lengthAdjust="spacingAndGlyphs" font-weight="bold">网络信息点</text>
<text class="t" x="865.3" y="714.1" font-size="6.2" textLength="5.8" lengthAdjust="spacingAndGlyphs" stroke="#fff" stroke-width=".35">39</text>
<text class="t" x="885.9" y="714.1" font-size="6.3" textLength="78" lengthAdjust="spacingAndGlyphs" stroke="#fff" stroke-width=".35">CAT6-4PrUTP-PC16, CC, WC</text>
<text class="t" x="1009.3" y="713.9" font-size="5.6" textLength="40.5" lengthAdjust="spacingAndGlyphs" font-weight="bold">下沿距地0.3米, 壁装</text>
<text class="t" x="816.6" y="728.4" font-size="5.6" textLength="37" lengthAdjust="spacingAndGlyphs" font-weight="bold">网络信息点 (内网)</text>
<text class="t" x="865.3" y="728.6" font-size="6.2" textLength="5.8" lengthAdjust="spacingAndGlyphs" stroke="#fff" stroke-width=".35">39</text>
<text class="t" x="885.9" y="728.6" font-size="6.3" textLength="78" lengthAdjust="spacingAndGlyphs" stroke="#fff" stroke-width=".35">CAT6-4PrUTP-PC16, CC, WC</text>
<text class="t" x="1009.3" y="728.4" font-size="5.6" textLength="40.5" lengthAdjust="spacingAndGlyphs" font-weight="bold">下沿距地0.3米, 壁装</text>
<text class="t" x="816.6" y="742.9" font-size="5.6" textLength="23.5" lengthAdjust="spacingAndGlyphs" font-weight="bold">语音信息点</text>
<text class="t" x="865.3" y="743.1" font-size="6.2" textLength="5.8" lengthAdjust="spacingAndGlyphs" stroke="#fff" stroke-width=".35">35</text>
<text class="t" x="885.9" y="743.1" font-size="6.3" textLength="78" lengthAdjust="spacingAndGlyphs" stroke="#fff" stroke-width=".35">CAT6-4PrUTP-PC16, CC, WC</text>
<text class="t" x="1009.3" y="742.9" font-size="5.6" textLength="40.5" lengthAdjust="spacingAndGlyphs" font-weight="bold">下沿距地0.3米, 壁装</text>
<text class="t" x="816.6" y="757.4" font-size="5.6" textLength="23.5" lengthAdjust="spacingAndGlyphs" font-weight="bold">网络信息点</text>
<text class="t" x="865.3" y="757.6" font-size="6.2" textLength="5.8" lengthAdjust="spacingAndGlyphs" stroke="#fff" stroke-width=".35">27</text>
<text class="t" x="885.9" y="757.6" font-size="6.3" textLength="89" lengthAdjust="spacingAndGlyphs" stroke="#fff" stroke-width=".35">CAT6-4PrUTP-PC16, CC, WC, FC</text>
<text class="t" x="1009.3" y="757.4" font-size="5.6" textLength="16.5" lengthAdjust="spacingAndGlyphs" font-weight="bold">地面安装</text>
<text class="t" x="816.6" y="771.9" font-size="5.6" textLength="37" lengthAdjust="spacingAndGlyphs" font-weight="bold">网络信息点 (内网)</text>
<text class="t" x="865.3" y="772.1" font-size="6.2" textLength="5.8" lengthAdjust="spacingAndGlyphs" stroke="#fff" stroke-width=".35">27</text>
<text class="t" x="885.9" y="772.1" font-size="6.3" textLength="89" lengthAdjust="spacingAndGlyphs" stroke="#fff" stroke-width=".35">CAT6-4PrUTP-PC16, CC, WC, FC</text>
<text class="t" x="1009.3" y="771.9" font-size="5.6" textLength="16.5" lengthAdjust="spacingAndGlyphs" font-weight="bold">地面安装</text>
<text class="t" x="816.6" y="786.4" font-size="5.6" textLength="23.5" lengthAdjust="spacingAndGlyphs" font-weight="bold">语音信息点</text>
<text class="t" x="865.3" y="786.6" font-size="6.2" textLength="5.8" lengthAdjust="spacingAndGlyphs" stroke="#fff" stroke-width=".35">23</text>
<text class="t" x="885.9" y="786.6" font-size="6.3" textLength="89" lengthAdjust="spacingAndGlyphs" stroke="#fff" stroke-width=".35">CAT6-4PrUTP-PC16, CC, WC, FC</text>
<text class="t" x="1009.3" y="786.4" font-size="5.6" textLength="16.5" lengthAdjust="spacingAndGlyphs" font-weight="bold">地面安装</text>
<text class="t" x="816.6" y="800.9" font-size="5.6" textLength="14.5" lengthAdjust="spacingAndGlyphs" font-weight="bold">吸顶音箱</text>
<text class="t" x="865.3" y="801.1" font-size="6.2" textLength="3.1" lengthAdjust="spacingAndGlyphs" stroke="#fff" stroke-width=".35">8</text>
<text class="t" x="885.9" y="801.1" font-size="6.3" textLength="75" lengthAdjust="spacingAndGlyphs" stroke="#fff" stroke-width=".35">RVS2×1.5-SC16, CC, WC, FC</text>
<text class="t" x="1009.3" y="800.9" font-size="5.6" textLength="16.5" lengthAdjust="spacingAndGlyphs" font-weight="bold">吸顶安装</text>
<text class="t" x="439.6" y="767.3" font-size="5.6" textLength="6.5" lengthAdjust="spacingAndGlyphs">注:</text>
<text class="t" x="449.2" y="767.3" font-size="5.9" textLength="75.5" lengthAdjust="spacingAndGlyphs" stroke="#fff" stroke-width=".35">1根CAT6-4PrUTP穿管PC16敷设;</text>
<text class="t" x="449.2" y="776.4" font-size="5.9" textLength="75.5" lengthAdjust="spacingAndGlyphs" stroke="#fff" stroke-width=".35">2根CAT6-4PrUTP穿管PC20敷设;</text>
<text class="t" x="449.2" y="785.5" font-size="5.9" textLength="75.5" lengthAdjust="spacingAndGlyphs" stroke="#fff" stroke-width=".35">3根CAT6-4PrUTP穿管PC25敷设;</text>
<text class="t" x="449.2" y="794.6" font-size="5.9" textLength="83.5" lengthAdjust="spacingAndGlyphs" stroke="#fff" stroke-width=".35">4根CAT6-4PrUTP穿管2根PC25敷设;</text>
<text class="t" x="449.2" y="803.7" font-size="5.9" textLength="102.5" lengthAdjust="spacingAndGlyphs" stroke="#fff" stroke-width=".35">水平桥架, 距地下1100MM, 桥架规格详见平面2.5M处标注.</text>
<text class="t" x="274.2" y="433.6" font-size="6.3" textLength="31" lengthAdjust="spacingAndGlyphs" transform="rotate(-90 274.2 433.6)" font-weight="bold" stroke="#fff" stroke-width=".4">150×100金属线槽</text>
<text class="t" x="292.5" y="396.1" font-size="6.3" textLength="37.5" lengthAdjust="spacingAndGlyphs" font-weight="bold" stroke="#fff" stroke-width=".4">150×100金属线槽</text>
<text class="t" x="285" y="440" font-size="6.3" textLength="124" lengthAdjust="spacingAndGlyphs" font-weight="bold" stroke="#fff" stroke-width=".4">200×100金属线槽, 距地下1100MM, 桥架规格详见平面2.5M处标注</text>
<text class="t" x="541.8" y="325.3" font-size="5.5" style="fill:#808080" textLength="11.5" lengthAdjust="spacingAndGlyphs" font-weight="bold">C-1 1</text>
<text class="t" x="434" y="541.5" font-size="5.5" style="fill:#808080" textLength="11.5" lengthAdjust="spacingAndGlyphs" font-weight="bold">D-碗</text>
<text class="t" x="542" y="531.7" font-size="5.5" style="fill:#808080" textLength="11.5" lengthAdjust="spacingAndGlyphs" font-weight="bold">C-1 1</text>
<text class="t" x="596.1" y="325.3" font-size="5.5" style="fill:#808080" textLength="11.5" lengthAdjust="spacingAndGlyphs" font-weight="bold">C-1 1</text>
<text class="t" x="596.1" y="531.7" font-size="5.5" style="fill:#808080" textLength="11.5" lengthAdjust="spacingAndGlyphs" font-weight="bold">C-1 1</text>
<text class="t" x="773.3" y="393" font-size="6.3" textLength="124" lengthAdjust="spacingAndGlyphs" font-weight="bold" stroke="#fff" stroke-width=".4">150×100金属线槽, 距地下1100MM, 桥架规格详见平面2.5M处标注</text>
<text class="t" x="773.3" y="444.1" font-size="6.3" textLength="124" lengthAdjust="spacingAndGlyphs" font-weight="bold" stroke="#fff" stroke-width=".4">150×100金属线槽, 距地下1100MM, 桥架规格详见平面2.5M处标注</text>
<text class="t" x="949.1" y="440.2" font-size="6.3" textLength="38" lengthAdjust="spacingAndGlyphs" transform="rotate(-90 949.1 440.2)" font-weight="bold" stroke="#fff" stroke-width=".4">300×100金属线槽</text>
</g>
</svg>
</body></html>
